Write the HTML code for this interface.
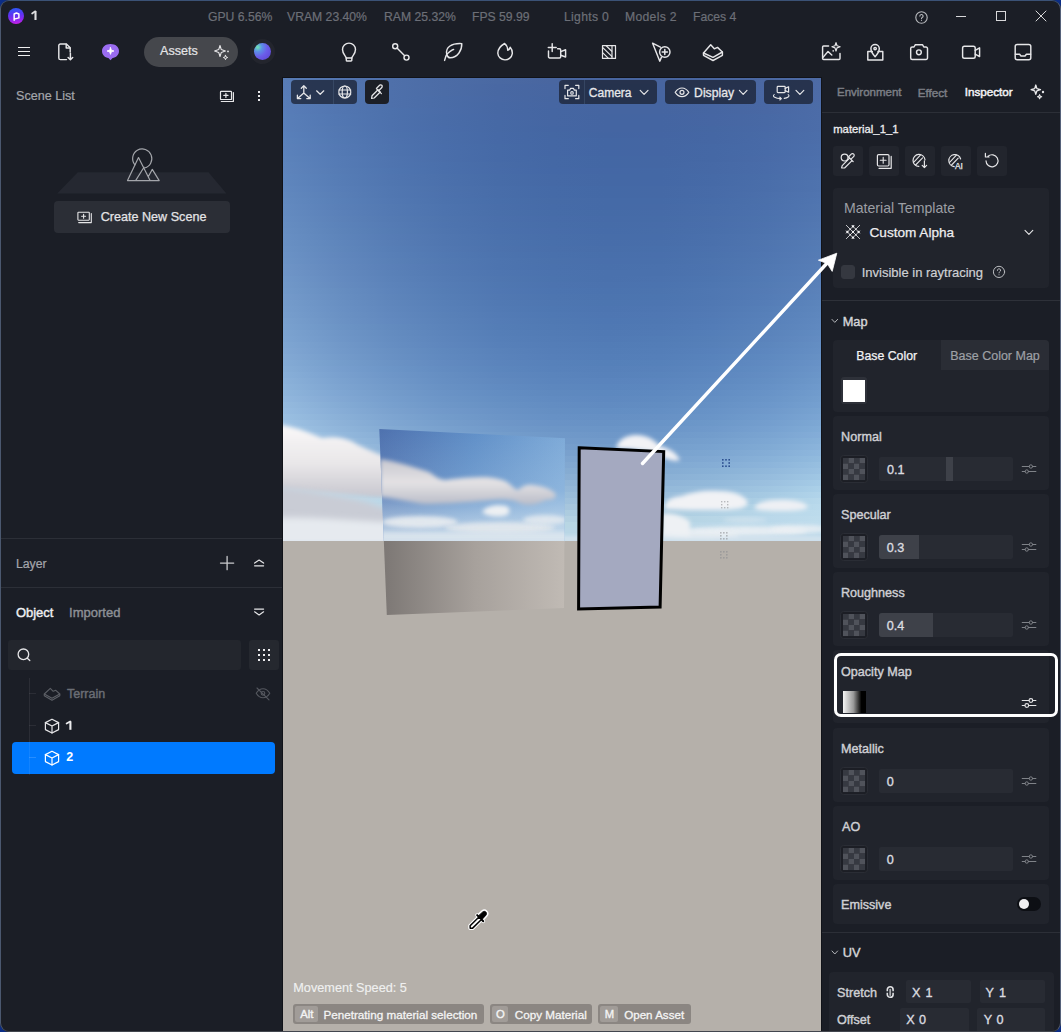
<!DOCTYPE html>
<html><head><meta charset="utf-8">
<style>
*{margin:0;padding:0;box-sizing:border-box}
html,body{width:1061px;height:1032px;overflow:hidden;background:#0b2d86;font-family:"Liberation Sans",sans-serif}
#win{position:absolute;left:0;top:0;width:1061px;height:1032px;border-radius:9px;background:#1b1e26;overflow:hidden}
#frame{position:absolute;left:0;top:0;width:1061px;height:1032px;border:1px solid #44567a;border-color:#3b5276 #56627a #42464e #4b586f;border-radius:9px;pointer-events:none}
.a{position:absolute}
.t{position:absolute;white-space:nowrap;line-height:1}
svg.i{position:absolute;overflow:visible;fill:none;stroke:#e6e6e8;stroke-width:1.45;stroke-linecap:round;stroke-linejoin:round}
.st{color:#6c6f77;font-size:12.2px;top:10.8px;-webkit-text-stroke:.2px #6c6f77}
.card{position:absolute;background:#21242c;border-radius:4px}
.inp{position:absolute;background:#282b33;border-radius:2px}
.chk{position:absolute;border-radius:3px;background:#2a2d35;border:1px solid #30333b;overflow:hidden}
.lbl{position:absolute;white-space:nowrap;line-height:1;font-size:13px;color:#cfd0d4;font-weight:bold}
.ibtn{position:absolute;width:30px;height:30px;background:#22252d;border-radius:3px}
.vb{position:absolute;background:rgba(28,36,54,0.78);border-radius:4px;height:24px;top:80px}
.key{position:absolute;top:1004px;height:20px;background:rgba(150,145,140,0.75);border-radius:2px}
</style></head><body>
<div id="win">

<!-- ===== TITLE BAR ===== -->
<div class="a" style="left:8px;top:8px;width:16px;height:16px;border-radius:50%;background:linear-gradient(175deg,#2a5cf8 0%,#5a34f2 40%,#8a28ee 70%,#d01ee6 100%)"></div>
<svg class="i" style="left:7.5px;top:7.5px" width="17" height="17" viewBox="0 0 17 17"><path d="M6.15 12.2 V6 L8.4 5 L10.9 6 V9.9 L6.15 11.1" stroke="#fff" stroke-width="1.45"/></svg>

<div class="t st" style="left:208px">GPU 6.56%</div>
<div class="t st" style="left:287px">VRAM 23.40%</div>
<div class="t st" style="left:384px">RAM 25.32%</div>
<div class="t st" style="left:472px">FPS 59.99</div>
<div class="t st" style="left:564px;letter-spacing:.3px">Lights 0</div>
<div class="t st" style="left:625px;letter-spacing:.3px">Models 2</div>
<div class="t st" style="left:693px">Faces 4</div>

<!-- help -->
<svg class="i" style="left:915px;top:11px" width="13" height="13" viewBox="0 0 13 13"><circle cx="6.5" cy="6.5" r="5.7" stroke="#b9bbbf" stroke-width="1.1"/><path d="M4.9 5.1 a1.6 1.6 0 1 1 2.3 1.4 c-.5 .3-.7 .6-.7 1.1" stroke="#b9bbbf" stroke-width="1.1"/><circle cx="6.5" cy="9.3" r=".6" fill="#b9bbbf" stroke="none"/></svg>
<!-- min -->
<div class="a" style="left:956px;top:16px;width:10px;height:1px;background:#d8d8da"></div>
<!-- max -->
<div class="a" style="left:996px;top:11px;width:10px;height:10px;border:1px solid #d8d8da"></div>
<!-- close -->
<svg class="i" style="left:1035px;top:10px" width="12" height="12" viewBox="0 0 12 12"><path d="M1 1 L11 11 M11 1 L1 11" stroke="#d8d8da" stroke-width="1"/></svg>

<!-- ===== TOOLBAR ===== -->
<div class="a" style="left:18px;top:47px;width:12px;height:1.2px;background:#eee"></div>
<div class="a" style="left:18px;top:51px;width:12px;height:1.2px;background:#eee"></div>
<div class="a" style="left:18px;top:55px;width:12px;height:1.2px;background:#eee"></div>

<!-- file import -->
<svg class="i" style="left:57px;top:43px" width="18" height="18" viewBox="0 0 18 18"><path d="M9.5 16.6 H3.4 a1.6 1.6 0 0 1-1.6-1.6 V2.6 a1.6 1.6 0 0 1 1.6-1.6 H9.4 L13.2 4.8 V9" /><path d="M9.2 1.2 V4.9 H13" /><path d="M13.4 10.2 V16.6 M11.1 14.4 L13.4 16.7 L15.7 14.4"/></svg>
<!-- purple chat -->
<svg class="i" style="left:101px;top:43px" width="19" height="18" viewBox="0 0 19 18"><path d="M9.5 1 C14.5 1 18 3.8 18 8 C18 12 15 14.6 11.6 15 L9.5 17.3 L7.4 15 C4 14.6 1 12 1 8 C1 3.8 4.5 1 9.5 1Z" fill="#9a6cf0" stroke="none"/><path d="M9.5 4.6 L10.4 7.2 L13 8 L10.4 8.8 L9.5 11.4 L8.6 8.8 L6 8 L8.6 7.2Z" fill="#fff" stroke="#fff" stroke-width=".8"/></svg>

<!-- Assets pill -->
<div class="a" style="left:144px;top:37px;width:94px;height:30px;border-radius:15px;background:#45474c"></div>
<svg class="i" style="left:214px;top:44px" width="16" height="16" viewBox="0 0 16 16"><path d="M6 1.5 L7.3 5.6 L11.4 7 L7.3 8.4 L6 12.5 L4.7 8.4 L0.6 7 L4.7 5.6Z" stroke-width="1.1"/><path d="M11.5 11.3 L12.1 12.9 L13.7 13.5 L12.1 14.1 L11.5 15.7 L10.9 14.1 L9.3 13.5 L10.9 12.9Z" stroke-width="1"/><circle cx="14" cy="7.4" r=".9" fill="#e6e6e8" stroke="none"/></svg>

<!-- sphere -->
<div class="a" style="left:250px;top:39px;width:25px;height:25px;border-radius:50%;background:#23252d"></div>
<div class="a" style="left:254px;top:43px;width:17px;height:17px;border-radius:50%;background:radial-gradient(circle at 22% 25%,#6fe7b2 0%,#5c8fe6 24%,#6b5ce9 52%,#5a42cf 100%)"></div>


<!-- bulb -->
<svg class="i" style="left:336px;top:38px" width="26" height="26" viewBox="336 38 26 26"><path d="M346.2 58 C345.8 56 342.5 54 342.5 49.6 A6.5 6.5 0 0 1 355.5 49.6 C355.5 54 352.2 56 351.8 58 Z"/><path d="M346.3 58 V60.2 a.8 .8 0 0 0 .8 .8 H351 a.8 .8 0 0 0 .8-.8 V58"/></svg>
<!-- link -->
<svg class="i" style="left:388px;top:38px" width="26" height="26" viewBox="388 38 26 26"><circle cx="395.2" cy="46.3" r="2.5"/><circle cx="406.5" cy="57.6" r="2.5"/><path d="M397 48.1 L404.7 55.8"/></svg>
<!-- leaf -->
<svg class="i" style="left:440px;top:38px" width="26" height="26" viewBox="440 38 26 26"><path d="M444.6 60.4 C445.5 57 446 55.5 447 54 C451 50.5 452 49.5 453.6 49.5"/><path d="M446.8 54.4 C445 47 452 43 461.8 43.6 C462 50 458 57.5 450 57.8 C448.5 57.8 447.5 56.5 446.8 54.4Z"/></svg>
<!-- flame -->
<svg class="i" style="left:494px;top:38px" width="22" height="26" viewBox="494 38 22 26"><path d="M504.6 43.5 C502 45 497.8 48 497.8 53.2 A7.3 7.3 0 0 0 512.3 53.6 C512.5 50.5 511.3 48.6 510.2 47.3 C509.8 48.8 509 49.8 507.8 50.2 C507.6 47.8 506.8 45.2 504.6 43.5Z"/></svg>
<!-- camera add -->
<svg class="i" style="left:544px;top:38px" width="26" height="26" viewBox="544 38 26 26"><path d="M552.2 43.6 V51.5 M548.3 47.5 H556.2"/><path d="M548.5 51 V56.7 a1.2 1.2 0 0 0 1.2 1.2 H559.5 a1.2 1.2 0 0 0 1.2-1.2 V50 a1.2 1.2 0 0 0-1.2-1.2 H557.6"/><path d="M560.8 51.6 L565.6 49.8 V57 L560.8 55.3"/></svg>
<!-- stripes -->
<svg class="i" style="left:598px;top:38px" width="22" height="26" viewBox="598 38 22 26"><rect x="602.5" y="45.6" width="13" height="12.8" stroke-width="1.2" stroke-linecap="butt"/><path d="M612 45.6 V58.4" stroke-width="1.2"/><path d="M606.2 45.8 L611.8 51.2 M602.8 47.6 L611.8 56.4 M602.8 52.8 L608.2 58.2" stroke-width="1.2"/></svg>
<!-- cursor plus -->
<svg class="i" style="left:648px;top:38px" width="26" height="26" viewBox="648 38 26 26"><path d="M660.4 47.2 L652.6 43.2 L659.8 61.2 L661.4 57.4"/><circle cx="664.8" cy="52" r="5.2"/><path d="M664.8 49.4 V54.6 M662.2 52 H667.4" stroke-width="1.5"/></svg>
<!-- terrain -->
<svg class="i" style="left:700px;top:38px" width="26" height="26" viewBox="700 38 26 26"><path d="M703.5 53 L710.7 44.8 L714.3 48.8 L717.5 47.4 L722.4 52 L713 57.3 Z"/><path d="M703.5 53 V55.3 L713 60.5 L722.4 55.3 V52"/></svg>

<!-- image sparkle -->
<svg class="i" style="left:818px;top:38px" width="26" height="26" viewBox="818 38 26 26"><path d="M828.6 46 H823.6 a1 1 0 0 0-1 1 V58.4 a1 1 0 0 0 1 1 H839 a1 1 0 0 0 1-1 V53.5"/><path d="M822.8 57.6 L828 51.5 L831.8 55"/><path d="M836 42.6 L837 45.7 L840.1 46.8 L837 47.9 L836 51 L835 47.9 L831.9 46.8 L835 45.7Z" stroke-width="1.2"/><circle cx="833.2" cy="50.9" r=".8" fill="#e6e6e8" stroke="none"/></svg>
<!-- location -->
<svg class="i" style="left:864px;top:38px" width="22" height="26" viewBox="864 38 22 26"><path d="M872.3 51.5 H867.8 V60 H882.8 V51.5 H878"/><path d="M875.1 56.7 C873 54.5 870.9 52 870.9 48.6 A4.2 4.2 0 0 1 879.3 48.6 C879.3 52 877.2 54.5 875.1 56.7Z"/><circle cx="875.1" cy="48.6" r="1.2"/></svg>
<!-- camera -->
<svg class="i" style="left:906px;top:38px" width="26" height="26" viewBox="906 38 26 26"><path d="M910.7 48.5 a1.5 1.5 0 0 1 1.5-1.5 H914 L915.2 44.8 H922.6 L923.8 47 H926 a1.5 1.5 0 0 1 1.5 1.5 V58 a1.5 1.5 0 0 1-1.5 1.5 H912.2 a1.5 1.5 0 0 1-1.5-1.5Z"/><circle cx="918.9" cy="52.3" r="2.4"/></svg>
<!-- video -->
<svg class="i" style="left:958px;top:38px" width="26" height="26" viewBox="958 38 26 26"><rect x="962.6" y="46.2" width="12.6" height="12" rx="1.8"/><path d="M975.2 50.3 L979.6 47.8 V56.6 L975.2 54.1"/></svg>
<!-- inbox -->
<svg class="i" style="left:1010px;top:38px" width="26" height="26" viewBox="1010 38 26 26"><rect x="1015.2" y="44.5" width="15.6" height="15.3" rx="2"/><path d="M1015.4 54.2 H1019.6 L1021 56 H1025 L1026.4 54.2 H1030.6"/></svg>

<!-- ===== LEFT PANEL ===== -->
<svg class="i" style="left:216px;top:86px" width="22" height="20" viewBox="216 86 22 20"><rect x="220.5" y="91.3" width="11" height="8.2" rx=".6" stroke-width="1.2"/><path d="M225.9 93.3 V97.5 M223.8 95.4 H228" stroke-width="1.2"/><path d="M221.3 101.5 H233.4 V92.6" stroke-width="1.2"/></svg>
<div class="a" style="left:258px;top:91px;width:2.2px;height:2.2px;background:#e8e8ea"></div>
<div class="a" style="left:258px;top:95px;width:2.2px;height:2.2px;background:#e8e8ea"></div>
<div class="a" style="left:258px;top:99px;width:2.2px;height:2.2px;background:#e8e8ea"></div>

<!-- empty scene illustration -->
<svg class="a" style="left:0;top:140px" width="282" height="60" viewBox="0 140 282 60"><path d="M77.8 172.2 H208.5 L226.4 193.4 H57.2 Z" fill="#252831"/></svg>
<svg class="i" style="left:120px;top:144px" width="44" height="42" viewBox="120 144 44 42"><path d="M134.9 164.8 A9.6 9.6 0 1 1 144.2 168" stroke="#a3a5aa" stroke-width="1.2"/><path d="M127.5 180.6 H159.2 M127.5 180.6 L138.5 157.6 L150.1 180.6 M135.6 180.6 L144 167.2 M148.5 176.2 L152.3 169.4 L159.2 180.6" stroke="#a3a5aa" stroke-width="1.2"/></svg>

<div class="a" style="left:54px;top:201px;width:176px;height:32px;border-radius:4px;background:#2b2e36"></div>
<svg class="i" style="left:74px;top:208px" width="22" height="20" viewBox="74 208 22 20"><rect x="77.9" y="212.2" width="11.4" height="8" rx=".6" stroke-width="1.1"/><path d="M83.6 214.2 V218.2 M81.6 216.2 H85.6" stroke-width="1.1"/><path d="M78.7 222.6 H91.3 V213.6" stroke-width="1.1"/></svg>

<div class="a" style="left:1px;top:538px;width:281px;height:1px;background:#2c2f37"></div>
<svg class="i" style="left:218px;top:554px" width="18" height="18" viewBox="218 554 18 18"><path d="M227.1 556.5 V569.7 M220.5 563.1 H233.7" stroke="#c9cacd" stroke-width="1.3"/></svg>
<svg class="i" style="left:250px;top:555px" width="18" height="14" viewBox="250 555 18 14"><path d="M254.6 563.1 L259.1 560.1 L263.6 563.1 M254.6 565.8 H263.6" stroke-width="1.2"/></svg>
<div class="a" style="left:1px;top:587px;width:281px;height:1px;background:#2c2f37"></div>

<svg class="i" style="left:250px;top:605px" width="18" height="14" viewBox="250 605 18 14"><path d="M254.6 609.1 H263.6 M254.6 611.8 L259.1 614.9 L263.6 611.8" stroke-width="1.2"/></svg>

<div class="a" style="left:8px;top:640px;width:233px;height:30px;border-radius:3px;background:#23262d"></div>
<svg class="i" style="left:14px;top:646px" width="20" height="20" viewBox="14 646 20 20"><circle cx="23.4" cy="654.3" r="5.3" stroke-width="1.3"/><path d="M27.3 658.3 L29.8 660.6" stroke-width="1.3"/></svg>
<div class="a" style="left:249px;top:640px;width:30px;height:30px;border-radius:3px;background:#25282f"></div>
<svg class="a" style="left:249px;top:640px" width="30" height="30" viewBox="249 640 30 30" fill="#ececee">
<rect x="258" y="649" width="2" height="2"/><rect x="263" y="649" width="2" height="2"/><rect x="268" y="649" width="2" height="2"/>
<rect x="258" y="654" width="2" height="2"/><rect x="263" y="654" width="2" height="2"/><rect x="268" y="654" width="2" height="2"/>
<rect x="258" y="659" width="2" height="2"/><rect x="263" y="659" width="2" height="2"/><rect x="268" y="659" width="2" height="2"/>
</svg>

<div class="a" style="left:12px;top:742px;width:263px;height:32px;border-radius:4px;background:#007aff"></div>
<div class="a" style="left:28.5px;top:678px;width:1px;height:97px;background:rgba(255,255,255,.07)"></div>
<div class="a" style="left:29px;top:693px;width:7px;height:1px;background:rgba(255,255,255,.07)"></div>
<div class="a" style="left:29px;top:725px;width:7px;height:1px;background:rgba(255,255,255,.07)"></div>
<div class="a" style="left:29px;top:757px;width:7px;height:1px;background:rgba(255,255,255,.15)"></div>

<svg class="i" style="left:40px;top:684px" width="24" height="20" viewBox="40 684 24 20"><path d="M44.3 694 L50.3 688.4 L53.2 691.3 L55.8 690.3 L59.8 694 L52 698.2 Z" stroke="#5c5f66" stroke-width="1.1"/><path d="M44.3 694 V695.8 L52 700.3 L59.8 695.8 V694" stroke="#5c5f66" stroke-width="1.1"/></svg>
<svg class="i" style="left:252px;top:684px" width="22" height="20" viewBox="252 684 22 20"><path d="M256.2 693.3 C258.5 689.5 261 688.8 263 688.8 C265 688.8 267.5 689.5 269.8 693.3 C267.5 697.1 265 697.8 263 697.8 C261 697.8 258.5 697.1 256.2 693.3Z" stroke="#55585f" stroke-width="1.1"/><circle cx="263" cy="693.3" r="1.8" stroke="#55585f" stroke-width="1.1"/><path d="M257 688 L269 699.8" stroke="#55585f" stroke-width="1.1"/></svg>

<svg class="i" style="left:40px;top:714px" width="24" height="24" viewBox="40 714 24 24"><path d="M52 719.2 L58.6 722.6 V729.6 L52 733 L45.4 729.6 V722.6 Z" stroke-width="1.2"/><path d="M45.4 722.6 L52 726 L58.6 722.6 M52 726 V733" stroke-width="1.2"/></svg>
<svg class="i" style="left:40px;top:746px" width="24" height="24" viewBox="40 746 24 24"><path d="M52 751.2 L58.6 754.6 V761.6 L52 765 L45.4 761.6 V754.6 Z" stroke="#fff" stroke-width="1.2"/><path d="M45.4 754.6 L52 758 L58.6 754.6 M52 758 V765" stroke="#fff" stroke-width="1.2"/></svg>

<!-- ===== VIEWPORT ===== -->
<div class="a" style="left:282px;top:77px;width:540px;height:954px;background:#111319"></div>
<svg class="a" style="left:283px;top:78px" width="538" height="953" viewBox="283 78 538 953">
<defs>
<linearGradient id="s0" x1="283" x2="821" y1="0" y2="0" gradientUnits="userSpaceOnUse"><stop offset="0.0" stop-color="#587cb5"/><stop offset="0.1" stop-color="#5375af"/><stop offset="0.2" stop-color="#4f70aa"/><stop offset="0.3" stop-color="#4c6ca6"/><stop offset="0.4" stop-color="#4a69a3"/><stop offset="0.5" stop-color="#4966a0"/><stop offset="0.6" stop-color="#48659f"/><stop offset="0.7" stop-color="#48659f"/><stop offset="0.8" stop-color="#4966a0"/><stop offset="0.9" stop-color="#4b68a2"/><stop offset="1.0" stop-color="#4e6ba5"/></linearGradient>
<linearGradient id="s1" x1="283" x2="821" y1="0" y2="0" gradientUnits="userSpaceOnUse"><stop offset="0.0" stop-color="#587cb6"/><stop offset="0.1" stop-color="#5376af"/><stop offset="0.2" stop-color="#4f70aa"/><stop offset="0.3" stop-color="#4c6ca6"/><stop offset="0.4" stop-color="#4968a3"/><stop offset="0.5" stop-color="#4866a1"/><stop offset="0.6" stop-color="#4765a0"/><stop offset="0.7" stop-color="#4765a0"/><stop offset="0.8" stop-color="#4966a1"/><stop offset="0.9" stop-color="#4b68a3"/><stop offset="1.0" stop-color="#4e6ba6"/></linearGradient>
<linearGradient id="s2" x1="283" x2="821" y1="0" y2="0" gradientUnits="userSpaceOnUse"><stop offset="0.0" stop-color="#587cb6"/><stop offset="0.1" stop-color="#5376b0"/><stop offset="0.2" stop-color="#4e70ab"/><stop offset="0.3" stop-color="#4b6ca6"/><stop offset="0.4" stop-color="#4868a3"/><stop offset="0.5" stop-color="#4766a1"/><stop offset="0.6" stop-color="#4665a0"/><stop offset="0.7" stop-color="#4765a0"/><stop offset="0.8" stop-color="#4866a1"/><stop offset="0.9" stop-color="#4a68a3"/><stop offset="1.0" stop-color="#4d6ba6"/></linearGradient>
<linearGradient id="s3" x1="283" x2="821" y1="0" y2="0" gradientUnits="userSpaceOnUse"><stop offset="0.0" stop-color="#587db7"/><stop offset="0.1" stop-color="#5276b0"/><stop offset="0.2" stop-color="#4e70ab"/><stop offset="0.3" stop-color="#4a6ca7"/><stop offset="0.4" stop-color="#4868a4"/><stop offset="0.5" stop-color="#4666a1"/><stop offset="0.6" stop-color="#4665a0"/><stop offset="0.7" stop-color="#4665a0"/><stop offset="0.8" stop-color="#4766a1"/><stop offset="0.9" stop-color="#4968a4"/><stop offset="1.0" stop-color="#4d6ba7"/></linearGradient>
<linearGradient id="s4" x1="283" x2="821" y1="0" y2="0" gradientUnits="userSpaceOnUse"><stop offset="0.0" stop-color="#587db7"/><stop offset="0.1" stop-color="#5276b1"/><stop offset="0.2" stop-color="#4e70ab"/><stop offset="0.3" stop-color="#4a6ca7"/><stop offset="0.4" stop-color="#4768a4"/><stop offset="0.5" stop-color="#4666a2"/><stop offset="0.6" stop-color="#4565a1"/><stop offset="0.7" stop-color="#4565a1"/><stop offset="0.8" stop-color="#4766a2"/><stop offset="0.9" stop-color="#4968a4"/><stop offset="1.0" stop-color="#4c6ca7"/></linearGradient>
<linearGradient id="s5" x1="283" x2="821" y1="0" y2="0" gradientUnits="userSpaceOnUse"><stop offset="0.0" stop-color="#587db8"/><stop offset="0.1" stop-color="#5276b1"/><stop offset="0.2" stop-color="#4d71ac"/><stop offset="0.3" stop-color="#4a6ca8"/><stop offset="0.4" stop-color="#4768a4"/><stop offset="0.5" stop-color="#4566a2"/><stop offset="0.6" stop-color="#4565a1"/><stop offset="0.7" stop-color="#4565a1"/><stop offset="0.8" stop-color="#4666a2"/><stop offset="0.9" stop-color="#4968a4"/><stop offset="1.0" stop-color="#4c6ca8"/></linearGradient>
<linearGradient id="s6" x1="283" x2="821" y1="0" y2="0" gradientUnits="userSpaceOnUse"><stop offset="0.0" stop-color="#587eb8"/><stop offset="0.1" stop-color="#5277b2"/><stop offset="0.2" stop-color="#4d71ac"/><stop offset="0.3" stop-color="#496ca8"/><stop offset="0.4" stop-color="#4768a5"/><stop offset="0.5" stop-color="#4566a2"/><stop offset="0.6" stop-color="#4465a1"/><stop offset="0.7" stop-color="#4465a2"/><stop offset="0.8" stop-color="#4666a3"/><stop offset="0.9" stop-color="#4869a5"/><stop offset="1.0" stop-color="#4c6ca8"/></linearGradient>
<linearGradient id="s7" x1="283" x2="821" y1="0" y2="0" gradientUnits="userSpaceOnUse"><stop offset="0.0" stop-color="#597fb9"/><stop offset="0.1" stop-color="#5277b2"/><stop offset="0.2" stop-color="#4d71ad"/><stop offset="0.3" stop-color="#496ca8"/><stop offset="0.4" stop-color="#4669a5"/><stop offset="0.5" stop-color="#4566a3"/><stop offset="0.6" stop-color="#4465a2"/><stop offset="0.7" stop-color="#4465a2"/><stop offset="0.8" stop-color="#4666a3"/><stop offset="0.9" stop-color="#4869a5"/><stop offset="1.0" stop-color="#4c6da9"/></linearGradient>
<linearGradient id="s8" x1="283" x2="821" y1="0" y2="0" gradientUnits="userSpaceOnUse"><stop offset="0.0" stop-color="#597fb9"/><stop offset="0.1" stop-color="#5378b2"/><stop offset="0.2" stop-color="#4d71ad"/><stop offset="0.3" stop-color="#496ca9"/><stop offset="0.4" stop-color="#4669a5"/><stop offset="0.5" stop-color="#4466a3"/><stop offset="0.6" stop-color="#4465a2"/><stop offset="0.7" stop-color="#4465a2"/><stop offset="0.8" stop-color="#4567a3"/><stop offset="0.9" stop-color="#4869a6"/><stop offset="1.0" stop-color="#4c6da9"/></linearGradient>
<linearGradient id="s9" x1="283" x2="821" y1="0" y2="0" gradientUnits="userSpaceOnUse"><stop offset="0.0" stop-color="#5980ba"/><stop offset="0.1" stop-color="#5378b3"/><stop offset="0.2" stop-color="#4d72ad"/><stop offset="0.3" stop-color="#496da9"/><stop offset="0.4" stop-color="#4669a6"/><stop offset="0.5" stop-color="#4467a3"/><stop offset="0.6" stop-color="#4365a2"/><stop offset="0.7" stop-color="#4465a3"/><stop offset="0.8" stop-color="#4567a4"/><stop offset="0.9" stop-color="#486aa6"/><stop offset="1.0" stop-color="#4c6eaa"/></linearGradient>
<linearGradient id="s10" x1="283" x2="821" y1="0" y2="0" gradientUnits="userSpaceOnUse"><stop offset="0.0" stop-color="#5a81ba"/><stop offset="0.1" stop-color="#5379b3"/><stop offset="0.2" stop-color="#4e72ae"/><stop offset="0.3" stop-color="#496da9"/><stop offset="0.4" stop-color="#4669a6"/><stop offset="0.5" stop-color="#4467a4"/><stop offset="0.6" stop-color="#4366a3"/><stop offset="0.7" stop-color="#4466a3"/><stop offset="0.8" stop-color="#4567a4"/><stop offset="0.9" stop-color="#486aa7"/><stop offset="1.0" stop-color="#4c6eaa"/></linearGradient>
<linearGradient id="s11" x1="283" x2="821" y1="0" y2="0" gradientUnits="userSpaceOnUse"><stop offset="0.0" stop-color="#5b81ba"/><stop offset="0.1" stop-color="#5479b4"/><stop offset="0.2" stop-color="#4e73ae"/><stop offset="0.3" stop-color="#496daa"/><stop offset="0.4" stop-color="#466aa6"/><stop offset="0.5" stop-color="#4467a4"/><stop offset="0.6" stop-color="#4366a3"/><stop offset="0.7" stop-color="#4466a3"/><stop offset="0.8" stop-color="#4568a5"/><stop offset="0.9" stop-color="#486aa7"/><stop offset="1.0" stop-color="#4c6fab"/></linearGradient>
<linearGradient id="s12" x1="283" x2="821" y1="0" y2="0" gradientUnits="userSpaceOnUse"><stop offset="0.0" stop-color="#5b82bb"/><stop offset="0.1" stop-color="#547ab4"/><stop offset="0.2" stop-color="#4e73ae"/><stop offset="0.3" stop-color="#4a6eaa"/><stop offset="0.4" stop-color="#466aa7"/><stop offset="0.5" stop-color="#4467a5"/><stop offset="0.6" stop-color="#4366a4"/><stop offset="0.7" stop-color="#4466a4"/><stop offset="0.8" stop-color="#4568a5"/><stop offset="0.9" stop-color="#486ba8"/><stop offset="1.0" stop-color="#4d6fab"/></linearGradient>
<linearGradient id="s13" x1="283" x2="821" y1="0" y2="0" gradientUnits="userSpaceOnUse"><stop offset="0.0" stop-color="#5c83bb"/><stop offset="0.1" stop-color="#557bb5"/><stop offset="0.2" stop-color="#4f74af"/><stop offset="0.3" stop-color="#4a6eaa"/><stop offset="0.4" stop-color="#466aa7"/><stop offset="0.5" stop-color="#4468a5"/><stop offset="0.6" stop-color="#4367a4"/><stop offset="0.7" stop-color="#4467a4"/><stop offset="0.8" stop-color="#4568a5"/><stop offset="0.9" stop-color="#496ba8"/><stop offset="1.0" stop-color="#4d70ac"/></linearGradient>
<linearGradient id="s14" x1="283" x2="821" y1="0" y2="0" gradientUnits="userSpaceOnUse"><stop offset="0.0" stop-color="#5d84bc"/><stop offset="0.1" stop-color="#557bb5"/><stop offset="0.2" stop-color="#4f74af"/><stop offset="0.3" stop-color="#4a6fab"/><stop offset="0.4" stop-color="#476ba7"/><stop offset="0.5" stop-color="#4468a5"/><stop offset="0.6" stop-color="#4367a4"/><stop offset="0.7" stop-color="#4467a4"/><stop offset="0.8" stop-color="#4669a6"/><stop offset="0.9" stop-color="#496ca9"/><stop offset="1.0" stop-color="#4d70ac"/></linearGradient>
<linearGradient id="s15" x1="283" x2="821" y1="0" y2="0" gradientUnits="userSpaceOnUse"><stop offset="0.0" stop-color="#5e84bc"/><stop offset="0.1" stop-color="#567cb5"/><stop offset="0.2" stop-color="#4f75b0"/><stop offset="0.3" stop-color="#4a6fab"/><stop offset="0.4" stop-color="#476ba8"/><stop offset="0.5" stop-color="#4468a6"/><stop offset="0.6" stop-color="#4467a5"/><stop offset="0.7" stop-color="#4468a5"/><stop offset="0.8" stop-color="#4669a6"/><stop offset="0.9" stop-color="#496ca9"/><stop offset="1.0" stop-color="#4e71ad"/></linearGradient>
<linearGradient id="s16" x1="283" x2="821" y1="0" y2="0" gradientUnits="userSpaceOnUse"><stop offset="0.0" stop-color="#5e85bd"/><stop offset="0.1" stop-color="#567db6"/><stop offset="0.2" stop-color="#5075b0"/><stop offset="0.3" stop-color="#4b70ab"/><stop offset="0.4" stop-color="#476ca8"/><stop offset="0.5" stop-color="#4569a6"/><stop offset="0.6" stop-color="#4468a5"/><stop offset="0.7" stop-color="#4468a5"/><stop offset="0.8" stop-color="#466aa7"/><stop offset="0.9" stop-color="#496da9"/><stop offset="1.0" stop-color="#4e72ad"/></linearGradient>
<linearGradient id="s17" x1="283" x2="821" y1="0" y2="0" gradientUnits="userSpaceOnUse"><stop offset="0.0" stop-color="#5f86bd"/><stop offset="0.1" stop-color="#577db6"/><stop offset="0.2" stop-color="#5076b0"/><stop offset="0.3" stop-color="#4b70ac"/><stop offset="0.4" stop-color="#476ca8"/><stop offset="0.5" stop-color="#4569a6"/><stop offset="0.6" stop-color="#4468a5"/><stop offset="0.7" stop-color="#4468a6"/><stop offset="0.8" stop-color="#466aa7"/><stop offset="0.9" stop-color="#4a6eaa"/><stop offset="1.0" stop-color="#4f73ae"/></linearGradient>
<linearGradient id="s18" x1="283" x2="821" y1="0" y2="0" gradientUnits="userSpaceOnUse"><stop offset="0.0" stop-color="#6087be"/><stop offset="0.1" stop-color="#587eb7"/><stop offset="0.2" stop-color="#5177b1"/><stop offset="0.3" stop-color="#4c71ac"/><stop offset="0.4" stop-color="#486da9"/><stop offset="0.5" stop-color="#456aa7"/><stop offset="0.6" stop-color="#4469a6"/><stop offset="0.7" stop-color="#4569a6"/><stop offset="0.8" stop-color="#476ba8"/><stop offset="0.9" stop-color="#4a6eaa"/><stop offset="1.0" stop-color="#4f73ae"/></linearGradient>
<linearGradient id="s19" x1="283" x2="821" y1="0" y2="0" gradientUnits="userSpaceOnUse"><stop offset="0.0" stop-color="#6188be"/><stop offset="0.1" stop-color="#597fb7"/><stop offset="0.2" stop-color="#5177b1"/><stop offset="0.3" stop-color="#4c71ad"/><stop offset="0.4" stop-color="#486da9"/><stop offset="0.5" stop-color="#456aa7"/><stop offset="0.6" stop-color="#4469a6"/><stop offset="0.7" stop-color="#4569a6"/><stop offset="0.8" stop-color="#476ba8"/><stop offset="0.9" stop-color="#4b6fab"/><stop offset="1.0" stop-color="#5074af"/></linearGradient>
<linearGradient id="s20" x1="283" x2="821" y1="0" y2="0" gradientUnits="userSpaceOnUse"><stop offset="0.0" stop-color="#6289bf"/><stop offset="0.1" stop-color="#5980b8"/><stop offset="0.2" stop-color="#5278b2"/><stop offset="0.3" stop-color="#4c72ad"/><stop offset="0.4" stop-color="#486eaa"/><stop offset="0.5" stop-color="#466ba7"/><stop offset="0.6" stop-color="#456aa7"/><stop offset="0.7" stop-color="#456aa7"/><stop offset="0.8" stop-color="#476ca9"/><stop offset="0.9" stop-color="#4b70ab"/><stop offset="1.0" stop-color="#5075b0"/></linearGradient>
<linearGradient id="s21" x1="283" x2="821" y1="0" y2="0" gradientUnits="userSpaceOnUse"><stop offset="0.0" stop-color="#638ac0"/><stop offset="0.1" stop-color="#5a80b8"/><stop offset="0.2" stop-color="#5379b2"/><stop offset="0.3" stop-color="#4d73ae"/><stop offset="0.4" stop-color="#496eaa"/><stop offset="0.5" stop-color="#466ba8"/><stop offset="0.6" stop-color="#456aa7"/><stop offset="0.7" stop-color="#466aa7"/><stop offset="0.8" stop-color="#486da9"/><stop offset="0.9" stop-color="#4b70ac"/><stop offset="1.0" stop-color="#5176b0"/></linearGradient>
<linearGradient id="s22" x1="283" x2="821" y1="0" y2="0" gradientUnits="userSpaceOnUse"><stop offset="0.0" stop-color="#648bc0"/><stop offset="0.1" stop-color="#5b81b9"/><stop offset="0.2" stop-color="#5379b3"/><stop offset="0.3" stop-color="#4d73ae"/><stop offset="0.4" stop-color="#496faa"/><stop offset="0.5" stop-color="#466ca8"/><stop offset="0.6" stop-color="#456ba7"/><stop offset="0.7" stop-color="#466ba8"/><stop offset="0.8" stop-color="#486daa"/><stop offset="0.9" stop-color="#4c71ad"/><stop offset="1.0" stop-color="#5176b1"/></linearGradient>
<linearGradient id="s23" x1="283" x2="821" y1="0" y2="0" gradientUnits="userSpaceOnUse"><stop offset="0.0" stop-color="#658cc1"/><stop offset="0.1" stop-color="#5c82b9"/><stop offset="0.2" stop-color="#547ab3"/><stop offset="0.3" stop-color="#4e74ae"/><stop offset="0.4" stop-color="#4a6fab"/><stop offset="0.5" stop-color="#476ca9"/><stop offset="0.6" stop-color="#466ba8"/><stop offset="0.7" stop-color="#466ca8"/><stop offset="0.8" stop-color="#496eaa"/><stop offset="0.9" stop-color="#4c72ad"/><stop offset="1.0" stop-color="#5277b1"/></linearGradient>
<linearGradient id="s24" x1="283" x2="821" y1="0" y2="0" gradientUnits="userSpaceOnUse"><stop offset="0.0" stop-color="#668dc1"/><stop offset="0.1" stop-color="#5c83ba"/><stop offset="0.2" stop-color="#557bb4"/><stop offset="0.3" stop-color="#4e74af"/><stop offset="0.4" stop-color="#4a70ab"/><stop offset="0.5" stop-color="#476da9"/><stop offset="0.6" stop-color="#466ca8"/><stop offset="0.7" stop-color="#476ca9"/><stop offset="0.8" stop-color="#496eab"/><stop offset="0.9" stop-color="#4d72ae"/><stop offset="1.0" stop-color="#5378b2"/></linearGradient>
<linearGradient id="s25" x1="283" x2="821" y1="0" y2="0" gradientUnits="userSpaceOnUse"><stop offset="0.0" stop-color="#678ec2"/><stop offset="0.1" stop-color="#5d84ba"/><stop offset="0.2" stop-color="#557cb4"/><stop offset="0.3" stop-color="#4f75af"/><stop offset="0.4" stop-color="#4a70ac"/><stop offset="0.5" stop-color="#486daa"/><stop offset="0.6" stop-color="#466ca9"/><stop offset="0.7" stop-color="#476da9"/><stop offset="0.8" stop-color="#496fab"/><stop offset="0.9" stop-color="#4d73ae"/><stop offset="1.0" stop-color="#5379b3"/></linearGradient>
<linearGradient id="s26" x1="283" x2="821" y1="0" y2="0" gradientUnits="userSpaceOnUse"><stop offset="0.0" stop-color="#688fc3"/><stop offset="0.1" stop-color="#5e85bb"/><stop offset="0.2" stop-color="#567cb5"/><stop offset="0.3" stop-color="#5076b0"/><stop offset="0.4" stop-color="#4b71ac"/><stop offset="0.5" stop-color="#486eaa"/><stop offset="0.6" stop-color="#476da9"/><stop offset="0.7" stop-color="#476daa"/><stop offset="0.8" stop-color="#4a70ac"/><stop offset="0.9" stop-color="#4e74af"/><stop offset="1.0" stop-color="#547ab3"/></linearGradient>
<linearGradient id="s27" x1="283" x2="821" y1="0" y2="0" gradientUnits="userSpaceOnUse"><stop offset="0.0" stop-color="#6990c3"/><stop offset="0.1" stop-color="#5f86bc"/><stop offset="0.2" stop-color="#577db5"/><stop offset="0.3" stop-color="#5076b0"/><stop offset="0.4" stop-color="#4b72ad"/><stop offset="0.5" stop-color="#486fab"/><stop offset="0.6" stop-color="#476daa"/><stop offset="0.7" stop-color="#486eaa"/><stop offset="0.8" stop-color="#4a70ac"/><stop offset="0.9" stop-color="#4f75af"/><stop offset="1.0" stop-color="#557bb4"/></linearGradient>
<linearGradient id="s28" x1="283" x2="821" y1="0" y2="0" gradientUnits="userSpaceOnUse"><stop offset="0.0" stop-color="#6a91c4"/><stop offset="0.1" stop-color="#6087bc"/><stop offset="0.2" stop-color="#577eb6"/><stop offset="0.3" stop-color="#5177b1"/><stop offset="0.4" stop-color="#4c72ad"/><stop offset="0.5" stop-color="#496fab"/><stop offset="0.6" stop-color="#486eaa"/><stop offset="0.7" stop-color="#486fab"/><stop offset="0.8" stop-color="#4b71ad"/><stop offset="0.9" stop-color="#4f75b0"/><stop offset="1.0" stop-color="#557cb5"/></linearGradient>
<linearGradient id="s29" x1="283" x2="821" y1="0" y2="0" gradientUnits="userSpaceOnUse"><stop offset="0.0" stop-color="#6b92c5"/><stop offset="0.1" stop-color="#6187bd"/><stop offset="0.2" stop-color="#587fb7"/><stop offset="0.3" stop-color="#5178b2"/><stop offset="0.4" stop-color="#4c73ae"/><stop offset="0.5" stop-color="#4970ac"/><stop offset="0.6" stop-color="#486fab"/><stop offset="0.7" stop-color="#496fac"/><stop offset="0.8" stop-color="#4b72ad"/><stop offset="0.9" stop-color="#5076b1"/><stop offset="1.0" stop-color="#567cb5"/></linearGradient>
<linearGradient id="s30" x1="283" x2="821" y1="0" y2="0" gradientUnits="userSpaceOnUse"><stop offset="0.0" stop-color="#6c93c5"/><stop offset="0.1" stop-color="#6288be"/><stop offset="0.2" stop-color="#5980b7"/><stop offset="0.3" stop-color="#5279b2"/><stop offset="0.4" stop-color="#4d74af"/><stop offset="0.5" stop-color="#4a71ac"/><stop offset="0.6" stop-color="#496fac"/><stop offset="0.7" stop-color="#4970ac"/><stop offset="0.8" stop-color="#4c73ae"/><stop offset="0.9" stop-color="#5077b1"/><stop offset="1.0" stop-color="#577db6"/></linearGradient>
<linearGradient id="s31" x1="283" x2="821" y1="0" y2="0" gradientUnits="userSpaceOnUse"><stop offset="0.0" stop-color="#6e94c6"/><stop offset="0.1" stop-color="#6389be"/><stop offset="0.2" stop-color="#5a80b8"/><stop offset="0.3" stop-color="#5379b3"/><stop offset="0.4" stop-color="#4d74af"/><stop offset="0.5" stop-color="#4a71ad"/><stop offset="0.6" stop-color="#4970ac"/><stop offset="0.7" stop-color="#4a71ad"/><stop offset="0.8" stop-color="#4c73af"/><stop offset="0.9" stop-color="#5178b2"/><stop offset="1.0" stop-color="#577eb7"/></linearGradient>
<linearGradient id="s32" x1="283" x2="821" y1="0" y2="0" gradientUnits="userSpaceOnUse"><stop offset="0.0" stop-color="#6f95c7"/><stop offset="0.1" stop-color="#648abf"/><stop offset="0.2" stop-color="#5a81b8"/><stop offset="0.3" stop-color="#537ab3"/><stop offset="0.4" stop-color="#4e75b0"/><stop offset="0.5" stop-color="#4b72ae"/><stop offset="0.6" stop-color="#4a71ad"/><stop offset="0.7" stop-color="#4a71ad"/><stop offset="0.8" stop-color="#4d74af"/><stop offset="0.9" stop-color="#5279b3"/><stop offset="1.0" stop-color="#587fb8"/></linearGradient>
<linearGradient id="s33" x1="283" x2="821" y1="0" y2="0" gradientUnits="userSpaceOnUse"><stop offset="0.0" stop-color="#7097c8"/><stop offset="0.1" stop-color="#658bc0"/><stop offset="0.2" stop-color="#5b82b9"/><stop offset="0.3" stop-color="#547bb4"/><stop offset="0.4" stop-color="#4f76b0"/><stop offset="0.5" stop-color="#4b73ae"/><stop offset="0.6" stop-color="#4a71ad"/><stop offset="0.7" stop-color="#4b72ae"/><stop offset="0.8" stop-color="#4d75b0"/><stop offset="0.9" stop-color="#527ab4"/><stop offset="1.0" stop-color="#5980b9"/></linearGradient>
<linearGradient id="s34" x1="283" x2="821" y1="0" y2="0" gradientUnits="userSpaceOnUse"><stop offset="0.0" stop-color="#7198c8"/><stop offset="0.1" stop-color="#668cc0"/><stop offset="0.2" stop-color="#5c83ba"/><stop offset="0.3" stop-color="#557cb5"/><stop offset="0.4" stop-color="#4f77b1"/><stop offset="0.5" stop-color="#4c73af"/><stop offset="0.6" stop-color="#4b72ae"/><stop offset="0.7" stop-color="#4b73af"/><stop offset="0.8" stop-color="#4e76b1"/><stop offset="0.9" stop-color="#537bb4"/><stop offset="1.0" stop-color="#5a81b9"/></linearGradient>
<linearGradient id="s35" x1="283" x2="821" y1="0" y2="0" gradientUnits="userSpaceOnUse"><stop offset="0.0" stop-color="#7299c9"/><stop offset="0.1" stop-color="#678ec1"/><stop offset="0.2" stop-color="#5d84bb"/><stop offset="0.3" stop-color="#557db5"/><stop offset="0.4" stop-color="#5077b2"/><stop offset="0.5" stop-color="#4c74b0"/><stop offset="0.6" stop-color="#4b73af"/><stop offset="0.7" stop-color="#4c74af"/><stop offset="0.8" stop-color="#4f77b2"/><stop offset="0.9" stop-color="#547bb5"/><stop offset="1.0" stop-color="#5b82ba"/></linearGradient>
<linearGradient id="s36" x1="283" x2="821" y1="0" y2="0" gradientUnits="userSpaceOnUse"><stop offset="0.0" stop-color="#749aca"/><stop offset="0.1" stop-color="#688fc2"/><stop offset="0.2" stop-color="#5e85bb"/><stop offset="0.3" stop-color="#567eb6"/><stop offset="0.4" stop-color="#5178b2"/><stop offset="0.5" stop-color="#4d75b0"/><stop offset="0.6" stop-color="#4c74af"/><stop offset="0.7" stop-color="#4c75b0"/><stop offset="0.8" stop-color="#4f77b2"/><stop offset="0.9" stop-color="#547cb6"/><stop offset="1.0" stop-color="#5b83bb"/></linearGradient>
<linearGradient id="s37" x1="283" x2="821" y1="0" y2="0" gradientUnits="userSpaceOnUse"><stop offset="0.0" stop-color="#759ccb"/><stop offset="0.1" stop-color="#6990c3"/><stop offset="0.2" stop-color="#5f86bc"/><stop offset="0.3" stop-color="#577fb7"/><stop offset="0.4" stop-color="#5179b3"/><stop offset="0.5" stop-color="#4e76b1"/><stop offset="0.6" stop-color="#4c75b0"/><stop offset="0.7" stop-color="#4d75b1"/><stop offset="0.8" stop-color="#5078b3"/><stop offset="0.9" stop-color="#557db7"/><stop offset="1.0" stop-color="#5c85bc"/></linearGradient>
<linearGradient id="s38" x1="283" x2="821" y1="0" y2="0" gradientUnits="userSpaceOnUse"><stop offset="0.0" stop-color="#769dcc"/><stop offset="0.1" stop-color="#6a91c4"/><stop offset="0.2" stop-color="#6087bd"/><stop offset="0.3" stop-color="#5880b8"/><stop offset="0.4" stop-color="#527ab4"/><stop offset="0.5" stop-color="#4e77b2"/><stop offset="0.6" stop-color="#4d75b1"/><stop offset="0.7" stop-color="#4e76b2"/><stop offset="0.8" stop-color="#5179b4"/><stop offset="0.9" stop-color="#567fb8"/><stop offset="1.0" stop-color="#5d86bd"/></linearGradient>
<linearGradient id="s39" x1="283" x2="821" y1="0" y2="0" gradientUnits="userSpaceOnUse"><stop offset="0.0" stop-color="#779ecd"/><stop offset="0.1" stop-color="#6b92c4"/><stop offset="0.2" stop-color="#6188be"/><stop offset="0.3" stop-color="#5981b8"/><stop offset="0.4" stop-color="#537bb5"/><stop offset="0.5" stop-color="#4f78b3"/><stop offset="0.6" stop-color="#4e76b2"/><stop offset="0.7" stop-color="#4f77b3"/><stop offset="0.8" stop-color="#527ab5"/><stop offset="0.9" stop-color="#5780b9"/><stop offset="1.0" stop-color="#5e87be"/></linearGradient>
<linearGradient id="s40" x1="283" x2="821" y1="0" y2="0" gradientUnits="userSpaceOnUse"><stop offset="0.0" stop-color="#79a0ce"/><stop offset="0.1" stop-color="#6c93c5"/><stop offset="0.2" stop-color="#6289bf"/><stop offset="0.3" stop-color="#5a82b9"/><stop offset="0.4" stop-color="#547cb6"/><stop offset="0.5" stop-color="#5079b3"/><stop offset="0.6" stop-color="#4e77b3"/><stop offset="0.7" stop-color="#4f78b3"/><stop offset="0.8" stop-color="#527bb6"/><stop offset="0.9" stop-color="#5881ba"/><stop offset="1.0" stop-color="#5f88bf"/></linearGradient>
<linearGradient id="s41" x1="283" x2="821" y1="0" y2="0" gradientUnits="userSpaceOnUse"><stop offset="0.0" stop-color="#7aa1cf"/><stop offset="0.1" stop-color="#6d95c6"/><stop offset="0.2" stop-color="#638bbf"/><stop offset="0.3" stop-color="#5b83ba"/><stop offset="0.4" stop-color="#547db6"/><stop offset="0.5" stop-color="#517ab4"/><stop offset="0.6" stop-color="#4f78b3"/><stop offset="0.7" stop-color="#5079b4"/><stop offset="0.8" stop-color="#537cb7"/><stop offset="0.9" stop-color="#5982ba"/><stop offset="1.0" stop-color="#6089c0"/></linearGradient>
<linearGradient id="s42" x1="283" x2="821" y1="0" y2="0" gradientUnits="userSpaceOnUse"><stop offset="0.0" stop-color="#7ca3d0"/><stop offset="0.1" stop-color="#6f96c7"/><stop offset="0.2" stop-color="#648cc0"/><stop offset="0.3" stop-color="#5c84bb"/><stop offset="0.4" stop-color="#557eb7"/><stop offset="0.5" stop-color="#527bb5"/><stop offset="0.6" stop-color="#5079b4"/><stop offset="0.7" stop-color="#517ab5"/><stop offset="0.8" stop-color="#547eb8"/><stop offset="0.9" stop-color="#5a83bb"/><stop offset="1.0" stop-color="#618bc1"/></linearGradient>
<linearGradient id="s43" x1="283" x2="821" y1="0" y2="0" gradientUnits="userSpaceOnUse"><stop offset="0.0" stop-color="#7da4d1"/><stop offset="0.1" stop-color="#7097c8"/><stop offset="0.2" stop-color="#658dc1"/><stop offset="0.3" stop-color="#5d85bc"/><stop offset="0.4" stop-color="#567fb8"/><stop offset="0.5" stop-color="#537cb6"/><stop offset="0.6" stop-color="#517ab5"/><stop offset="0.7" stop-color="#527cb6"/><stop offset="0.8" stop-color="#557fb8"/><stop offset="0.9" stop-color="#5b84bc"/><stop offset="1.0" stop-color="#638cc2"/></linearGradient>
<linearGradient id="s44" x1="283" x2="821" y1="0" y2="0" gradientUnits="userSpaceOnUse"><stop offset="0.0" stop-color="#7fa6d2"/><stop offset="0.1" stop-color="#7299c9"/><stop offset="0.2" stop-color="#668ec2"/><stop offset="0.3" stop-color="#5e86bd"/><stop offset="0.4" stop-color="#5780b9"/><stop offset="0.5" stop-color="#547db7"/><stop offset="0.6" stop-color="#527cb6"/><stop offset="0.7" stop-color="#537db7"/><stop offset="0.8" stop-color="#5680b9"/><stop offset="0.9" stop-color="#5c86bd"/><stop offset="1.0" stop-color="#648ec3"/></linearGradient>
<linearGradient id="s45" x1="283" x2="821" y1="0" y2="0" gradientUnits="userSpaceOnUse"><stop offset="0.0" stop-color="#81a7d3"/><stop offset="0.1" stop-color="#739aca"/><stop offset="0.2" stop-color="#6890c3"/><stop offset="0.3" stop-color="#5f88be"/><stop offset="0.4" stop-color="#5982ba"/><stop offset="0.5" stop-color="#557eb8"/><stop offset="0.6" stop-color="#537db7"/><stop offset="0.7" stop-color="#547eb8"/><stop offset="0.8" stop-color="#5781bb"/><stop offset="0.9" stop-color="#5d87bf"/><stop offset="1.0" stop-color="#658fc4"/></linearGradient>
<linearGradient id="s46" x1="283" x2="821" y1="0" y2="0" gradientUnits="userSpaceOnUse"><stop offset="0.0" stop-color="#83a9d4"/><stop offset="0.1" stop-color="#759ccb"/><stop offset="0.2" stop-color="#6991c4"/><stop offset="0.3" stop-color="#6089bf"/><stop offset="0.4" stop-color="#5a83bb"/><stop offset="0.5" stop-color="#567fb9"/><stop offset="0.6" stop-color="#547eb8"/><stop offset="0.7" stop-color="#557fb9"/><stop offset="0.8" stop-color="#5883bc"/><stop offset="0.9" stop-color="#5e89c0"/><stop offset="1.0" stop-color="#6791c5"/></linearGradient>
<linearGradient id="s47" x1="283" x2="821" y1="0" y2="0" gradientUnits="userSpaceOnUse"><stop offset="0.0" stop-color="#84abd5"/><stop offset="0.1" stop-color="#769ecc"/><stop offset="0.2" stop-color="#6b93c5"/><stop offset="0.3" stop-color="#628ac0"/><stop offset="0.4" stop-color="#5b84bc"/><stop offset="0.5" stop-color="#5781ba"/><stop offset="0.6" stop-color="#5580b9"/><stop offset="0.7" stop-color="#5681ba"/><stop offset="0.8" stop-color="#5a84bd"/><stop offset="0.9" stop-color="#608ac1"/><stop offset="1.0" stop-color="#6892c7"/></linearGradient>
<linearGradient id="s48" x1="283" x2="821" y1="0" y2="0" gradientUnits="userSpaceOnUse"><stop offset="0.0" stop-color="#86add6"/><stop offset="0.1" stop-color="#789fce"/><stop offset="0.2" stop-color="#6c95c7"/><stop offset="0.3" stop-color="#638cc1"/><stop offset="0.4" stop-color="#5c86bd"/><stop offset="0.5" stop-color="#5882bb"/><stop offset="0.6" stop-color="#5781ba"/><stop offset="0.7" stop-color="#5882bb"/><stop offset="0.8" stop-color="#5b86be"/><stop offset="0.9" stop-color="#618cc2"/><stop offset="1.0" stop-color="#6a94c8"/></linearGradient>
<linearGradient id="s49" x1="283" x2="821" y1="0" y2="0" gradientUnits="userSpaceOnUse"><stop offset="0.0" stop-color="#88afd8"/><stop offset="0.1" stop-color="#7aa1cf"/><stop offset="0.2" stop-color="#6e96c8"/><stop offset="0.3" stop-color="#658ec2"/><stop offset="0.4" stop-color="#5e87be"/><stop offset="0.5" stop-color="#5a84bc"/><stop offset="0.6" stop-color="#5882bb"/><stop offset="0.7" stop-color="#5984bc"/><stop offset="0.8" stop-color="#5d87bf"/><stop offset="0.9" stop-color="#638dc3"/><stop offset="1.0" stop-color="#6b96c9"/></linearGradient>
<linearGradient id="s50" x1="283" x2="821" y1="0" y2="0" gradientUnits="userSpaceOnUse"><stop offset="0.0" stop-color="#8bb1d9"/><stop offset="0.1" stop-color="#7ca3d0"/><stop offset="0.2" stop-color="#7098c9"/><stop offset="0.3" stop-color="#668fc3"/><stop offset="0.4" stop-color="#6089bf"/><stop offset="0.5" stop-color="#5b85bd"/><stop offset="0.6" stop-color="#5a84bd"/><stop offset="0.7" stop-color="#5b85be"/><stop offset="0.8" stop-color="#5e89c0"/><stop offset="0.9" stop-color="#648fc4"/><stop offset="1.0" stop-color="#6d98ca"/></linearGradient>
<linearGradient id="s51" x1="283" x2="821" y1="0" y2="0" gradientUnits="userSpaceOnUse"><stop offset="0.0" stop-color="#8db3da"/><stop offset="0.1" stop-color="#7ea5d1"/><stop offset="0.2" stop-color="#729aca"/><stop offset="0.3" stop-color="#6891c4"/><stop offset="0.4" stop-color="#618bc1"/><stop offset="0.5" stop-color="#5d87be"/><stop offset="0.6" stop-color="#5b86be"/><stop offset="0.7" stop-color="#5c87bf"/><stop offset="0.8" stop-color="#608bc1"/><stop offset="0.9" stop-color="#6691c6"/><stop offset="1.0" stop-color="#6f9acc"/></linearGradient>
<linearGradient id="s52" x1="283" x2="821" y1="0" y2="0" gradientUnits="userSpaceOnUse"><stop offset="0.0" stop-color="#8fb5db"/><stop offset="0.1" stop-color="#80a7d3"/><stop offset="0.2" stop-color="#749ccb"/><stop offset="0.3" stop-color="#6a93c6"/><stop offset="0.4" stop-color="#638dc2"/><stop offset="0.5" stop-color="#5f89bf"/><stop offset="0.6" stop-color="#5d88bf"/><stop offset="0.7" stop-color="#5e89c0"/><stop offset="0.8" stop-color="#628dc3"/><stop offset="0.9" stop-color="#6893c7"/><stop offset="1.0" stop-color="#719ccd"/></linearGradient>
<linearGradient id="s53" x1="283" x2="821" y1="0" y2="0" gradientUnits="userSpaceOnUse"><stop offset="0.0" stop-color="#92b7dd"/><stop offset="0.1" stop-color="#83a9d4"/><stop offset="0.2" stop-color="#769ecd"/><stop offset="0.3" stop-color="#6c95c7"/><stop offset="0.4" stop-color="#658fc3"/><stop offset="0.5" stop-color="#618bc1"/><stop offset="0.6" stop-color="#5f89c0"/><stop offset="0.7" stop-color="#608bc1"/><stop offset="0.8" stop-color="#648fc4"/><stop offset="0.9" stop-color="#6a95c8"/><stop offset="1.0" stop-color="#739ece"/></linearGradient>
<linearGradient id="s54" x1="283" x2="821" y1="0" y2="0" gradientUnits="userSpaceOnUse"><stop offset="0.0" stop-color="#95bade"/><stop offset="0.1" stop-color="#85acd5"/><stop offset="0.2" stop-color="#78a0ce"/><stop offset="0.3" stop-color="#6e97c8"/><stop offset="0.4" stop-color="#6791c4"/><stop offset="0.5" stop-color="#638dc2"/><stop offset="0.6" stop-color="#618bc1"/><stop offset="0.7" stop-color="#628dc2"/><stop offset="0.8" stop-color="#6691c5"/><stop offset="0.9" stop-color="#6c97ca"/><stop offset="1.0" stop-color="#75a0d0"/></linearGradient>
<linearGradient id="s55" x1="283" x2="821" y1="0" y2="0" gradientUnits="userSpaceOnUse"><stop offset="0.0" stop-color="#97bce0"/><stop offset="0.1" stop-color="#88aed7"/><stop offset="0.2" stop-color="#7ba2cf"/><stop offset="0.3" stop-color="#7199ca"/><stop offset="0.4" stop-color="#6a93c6"/><stop offset="0.5" stop-color="#658fc3"/><stop offset="0.6" stop-color="#638ec3"/><stop offset="0.7" stop-color="#648fc4"/><stop offset="0.8" stop-color="#6893c7"/><stop offset="0.9" stop-color="#6f99cb"/><stop offset="1.0" stop-color="#78a3d1"/></linearGradient>
<linearGradient id="s56" x1="283" x2="821" y1="0" y2="0" gradientUnits="userSpaceOnUse"><stop offset="0.0" stop-color="#9abfe1"/><stop offset="0.1" stop-color="#8bb1d8"/><stop offset="0.2" stop-color="#7ea5d1"/><stop offset="0.3" stop-color="#739ccb"/><stop offset="0.4" stop-color="#6c95c7"/><stop offset="0.5" stop-color="#6791c5"/><stop offset="0.6" stop-color="#6690c4"/><stop offset="0.7" stop-color="#6791c5"/><stop offset="0.8" stop-color="#6a95c8"/><stop offset="0.9" stop-color="#719ccd"/><stop offset="1.0" stop-color="#7ba5d3"/></linearGradient>
<linearGradient id="s57" x1="283" x2="821" y1="0" y2="0" gradientUnits="userSpaceOnUse"><stop offset="0.0" stop-color="#9ec2e3"/><stop offset="0.1" stop-color="#8eb3d9"/><stop offset="0.2" stop-color="#80a7d2"/><stop offset="0.3" stop-color="#769ecc"/><stop offset="0.4" stop-color="#6f97c8"/><stop offset="0.5" stop-color="#6a93c6"/><stop offset="0.6" stop-color="#6892c5"/><stop offset="0.7" stop-color="#6994c7"/><stop offset="0.8" stop-color="#6d98c9"/><stop offset="0.9" stop-color="#749ece"/><stop offset="1.0" stop-color="#7da8d4"/></linearGradient>
<linearGradient id="s58" x1="283" x2="821" y1="0" y2="0" gradientUnits="userSpaceOnUse"><stop offset="0.0" stop-color="#a1c5e4"/><stop offset="0.1" stop-color="#91b6db"/><stop offset="0.2" stop-color="#83aad3"/><stop offset="0.3" stop-color="#79a1ce"/><stop offset="0.4" stop-color="#719aca"/><stop offset="0.5" stop-color="#6d96c7"/><stop offset="0.6" stop-color="#6b95c7"/><stop offset="0.7" stop-color="#6c96c8"/><stop offset="0.8" stop-color="#709acb"/><stop offset="0.9" stop-color="#77a1d0"/><stop offset="1.0" stop-color="#80abd6"/></linearGradient>
<linearGradient id="s59" x1="283" x2="821" y1="0" y2="0" gradientUnits="userSpaceOnUse"><stop offset="0.0" stop-color="#a5c8e6"/><stop offset="0.1" stop-color="#94b9dd"/><stop offset="0.2" stop-color="#87add5"/><stop offset="0.3" stop-color="#7ca3cf"/><stop offset="0.4" stop-color="#749dcb"/><stop offset="0.5" stop-color="#7099c9"/><stop offset="0.6" stop-color="#6e97c8"/><stop offset="0.7" stop-color="#6f99ca"/><stop offset="0.8" stop-color="#739dcc"/><stop offset="0.9" stop-color="#7aa4d1"/><stop offset="1.0" stop-color="#84add8"/></linearGradient>
<linearGradient id="s60" x1="283" x2="821" y1="0" y2="0" gradientUnits="userSpaceOnUse"><stop offset="0.0" stop-color="#a8cbe7"/><stop offset="0.1" stop-color="#98bcde"/><stop offset="0.2" stop-color="#8ab0d7"/><stop offset="0.3" stop-color="#7fa6d1"/><stop offset="0.4" stop-color="#789fcd"/><stop offset="0.5" stop-color="#739bca"/><stop offset="0.6" stop-color="#719aca"/><stop offset="0.7" stop-color="#729ccb"/><stop offset="0.8" stop-color="#76a0ce"/><stop offset="0.9" stop-color="#7da7d3"/><stop offset="1.0" stop-color="#87b1d9"/></linearGradient>
<linearGradient id="s61" x1="283" x2="821" y1="0" y2="0" gradientUnits="userSpaceOnUse"><stop offset="0.0" stop-color="#accfe9"/><stop offset="0.1" stop-color="#9cbfe0"/><stop offset="0.2" stop-color="#8eb3d8"/><stop offset="0.3" stop-color="#83a9d2"/><stop offset="0.4" stop-color="#7ba2ce"/><stop offset="0.5" stop-color="#769ecc"/><stop offset="0.6" stop-color="#749dcb"/><stop offset="0.7" stop-color="#759fcd"/><stop offset="0.8" stop-color="#79a3d0"/><stop offset="0.9" stop-color="#80aad4"/><stop offset="1.0" stop-color="#8bb4db"/></linearGradient>
<linearGradient id="s62" x1="283" x2="821" y1="0" y2="0" gradientUnits="userSpaceOnUse"><stop offset="0.0" stop-color="#b1d2eb"/><stop offset="0.1" stop-color="#a0c3e1"/><stop offset="0.2" stop-color="#92b6da"/><stop offset="0.3" stop-color="#87add4"/><stop offset="0.4" stop-color="#7fa6d0"/><stop offset="0.5" stop-color="#7aa1cd"/><stop offset="0.6" stop-color="#78a0cd"/><stop offset="0.7" stop-color="#79a2ce"/><stop offset="0.8" stop-color="#7da6d1"/><stop offset="0.9" stop-color="#84add6"/><stop offset="1.0" stop-color="#8eb7dd"/></linearGradient>
<linearGradient id="s63" x1="283" x2="821" y1="0" y2="0" gradientUnits="userSpaceOnUse"><stop offset="0.0" stop-color="#b5d6ed"/><stop offset="0.1" stop-color="#a4c6e3"/><stop offset="0.2" stop-color="#96badb"/><stop offset="0.3" stop-color="#8bb0d5"/><stop offset="0.4" stop-color="#83a9d1"/><stop offset="0.5" stop-color="#7ea5cf"/><stop offset="0.6" stop-color="#7ca3cf"/><stop offset="0.7" stop-color="#7da5d0"/><stop offset="0.8" stop-color="#81a9d3"/><stop offset="0.9" stop-color="#88b1d8"/><stop offset="1.0" stop-color="#92bbde"/></linearGradient>
<linearGradient id="s64" x1="283" x2="821" y1="0" y2="0" gradientUnits="userSpaceOnUse"><stop offset="0.0" stop-color="#badaee"/><stop offset="0.1" stop-color="#a8cae5"/><stop offset="0.2" stop-color="#9abddd"/><stop offset="0.3" stop-color="#8fb3d7"/><stop offset="0.4" stop-color="#87acd3"/><stop offset="0.5" stop-color="#82a8d1"/><stop offset="0.6" stop-color="#80a7d0"/><stop offset="0.7" stop-color="#81a9d2"/><stop offset="0.8" stop-color="#85add5"/><stop offset="0.9" stop-color="#8cb4da"/><stop offset="1.0" stop-color="#97bfe0"/></linearGradient>
<linearGradient id="s65" x1="283" x2="821" y1="0" y2="0" gradientUnits="userSpaceOnUse"><stop offset="0.0" stop-color="#bfdef0"/><stop offset="0.1" stop-color="#adcee7"/><stop offset="0.2" stop-color="#9fc1df"/><stop offset="0.3" stop-color="#93b7d9"/><stop offset="0.4" stop-color="#8bb0d5"/><stop offset="0.5" stop-color="#86acd2"/><stop offset="0.6" stop-color="#84abd2"/><stop offset="0.7" stop-color="#85acd3"/><stop offset="0.8" stop-color="#89b1d6"/><stop offset="0.9" stop-color="#91b8db"/><stop offset="1.0" stop-color="#9bc2e2"/></linearGradient>
<linearGradient id="s66" x1="283" x2="821" y1="0" y2="0" gradientUnits="userSpaceOnUse"><stop offset="0.0" stop-color="#c3e1f0"/><stop offset="0.1" stop-color="#b2d2e8"/><stop offset="0.2" stop-color="#a4c5e1"/><stop offset="0.3" stop-color="#98bbdb"/><stop offset="0.4" stop-color="#90b4d6"/><stop offset="0.5" stop-color="#8bb0d4"/><stop offset="0.6" stop-color="#89aed4"/><stop offset="0.7" stop-color="#8ab0d5"/><stop offset="0.8" stop-color="#8eb5d8"/><stop offset="0.9" stop-color="#96bcdd"/><stop offset="1.0" stop-color="#a0c7e4"/></linearGradient>
<linearGradient id="s67" x1="283" x2="821" y1="0" y2="0" gradientUnits="userSpaceOnUse"><stop offset="0.0" stop-color="#c6e1f0"/><stop offset="0.1" stop-color="#b8d6ea"/><stop offset="0.2" stop-color="#a9cae2"/><stop offset="0.3" stop-color="#9dbfdc"/><stop offset="0.4" stop-color="#95b8d8"/><stop offset="0.5" stop-color="#90b4d6"/><stop offset="0.6" stop-color="#8eb3d5"/><stop offset="0.7" stop-color="#8fb4d7"/><stop offset="0.8" stop-color="#93b9da"/><stop offset="0.9" stop-color="#9bc0df"/><stop offset="1.0" stop-color="#a5cbe6"/></linearGradient>
<linearGradient id="s68" x1="283" x2="821" y1="0" y2="0" gradientUnits="userSpaceOnUse"><stop offset="0.0" stop-color="#c8e1f0"/><stop offset="0.1" stop-color="#bcdaeb"/><stop offset="0.2" stop-color="#aecee4"/><stop offset="0.3" stop-color="#a3c4de"/><stop offset="0.4" stop-color="#9abcda"/><stop offset="0.5" stop-color="#95b8d8"/><stop offset="0.6" stop-color="#93b7d7"/><stop offset="0.7" stop-color="#94b9d9"/><stop offset="0.8" stop-color="#98bddc"/><stop offset="0.9" stop-color="#a0c5e1"/><stop offset="1.0" stop-color="#abd0e8"/></linearGradient>
<linearGradient id="s69" x1="283" x2="821" y1="0" y2="0" gradientUnits="userSpaceOnUse"><stop offset="0.0" stop-color="#c8e1f0"/><stop offset="0.1" stop-color="#bfdcec"/><stop offset="0.2" stop-color="#b4d3e6"/><stop offset="0.3" stop-color="#a8c8e0"/><stop offset="0.4" stop-color="#a0c1dc"/><stop offset="0.5" stop-color="#9abdda"/><stop offset="0.6" stop-color="#98bbd9"/><stop offset="0.7" stop-color="#9abddb"/><stop offset="0.8" stop-color="#9ec2de"/><stop offset="0.9" stop-color="#a6cae3"/><stop offset="1.0" stop-color="#b1d4ea"/></linearGradient>
<linearGradient id="s70" x1="283" x2="821" y1="0" y2="0" gradientUnits="userSpaceOnUse"><stop offset="0.0" stop-color="#c8e1f0"/><stop offset="0.1" stop-color="#c2deed"/><stop offset="0.2" stop-color="#b9d7e8"/><stop offset="0.3" stop-color="#aecde2"/><stop offset="0.4" stop-color="#a6c6de"/><stop offset="0.5" stop-color="#a0c1dc"/><stop offset="0.6" stop-color="#9ec0db"/><stop offset="0.7" stop-color="#9fc2dd"/><stop offset="0.8" stop-color="#a4c7e0"/><stop offset="0.9" stop-color="#accfe5"/><stop offset="1.0" stop-color="#b7d8eb"/></linearGradient>
<linearGradient id="s71" x1="283" x2="821" y1="0" y2="0" gradientUnits="userSpaceOnUse"><stop offset="0.0" stop-color="#c8e1f0"/><stop offset="0.1" stop-color="#c3dfee"/><stop offset="0.2" stop-color="#bcd9ea"/><stop offset="0.3" stop-color="#b5d2e4"/><stop offset="0.4" stop-color="#accbe0"/><stop offset="0.5" stop-color="#a7c6dd"/><stop offset="0.6" stop-color="#a5c5dd"/><stop offset="0.7" stop-color="#a6c7de"/><stop offset="0.8" stop-color="#aacce2"/><stop offset="0.9" stop-color="#b2d4e7"/><stop offset="1.0" stop-color="#badaec"/></linearGradient>
<linearGradient id="s72" x1="283" x2="821" y1="0" y2="0" gradientUnits="userSpaceOnUse"><stop offset="0.0" stop-color="#c8e1f0"/><stop offset="0.1" stop-color="#c4e0ee"/><stop offset="0.2" stop-color="#bedaeb"/><stop offset="0.3" stop-color="#b9d6e6"/><stop offset="0.4" stop-color="#b3d0e2"/><stop offset="0.5" stop-color="#adccdf"/><stop offset="0.6" stop-color="#abcadf"/><stop offset="0.7" stop-color="#accce0"/><stop offset="0.8" stop-color="#b1d1e4"/><stop offset="0.9" stop-color="#b8d7e9"/><stop offset="1.0" stop-color="#bcdbec"/></linearGradient>
<linearGradient id="s73" x1="283" x2="821" y1="0" y2="0" gradientUnits="userSpaceOnUse"><stop offset="0.0" stop-color="#c8e1f0"/><stop offset="0.1" stop-color="#c3dfed"/><stop offset="0.2" stop-color="#bfdbeb"/><stop offset="0.3" stop-color="#bbd8e8"/><stop offset="0.4" stop-color="#b8d6e4"/><stop offset="0.5" stop-color="#b4d1e1"/><stop offset="0.6" stop-color="#b2d0e1"/><stop offset="0.7" stop-color="#b3d2e3"/><stop offset="0.8" stop-color="#b8d6e6"/><stop offset="0.9" stop-color="#bad8ea"/><stop offset="1.0" stop-color="#bedcec"/></linearGradient>
<linearGradient id="s74" x1="283" x2="821" y1="0" y2="0" gradientUnits="userSpaceOnUse"><stop offset="0.0" stop-color="#c6deee"/><stop offset="0.1" stop-color="#c2deed"/><stop offset="0.2" stop-color="#bedbeb"/><stop offset="0.3" stop-color="#bcd8ea"/><stop offset="0.4" stop-color="#bad7e6"/><stop offset="0.5" stop-color="#b8d6e4"/><stop offset="0.6" stop-color="#b8d6e3"/><stop offset="0.7" stop-color="#b8d6e5"/><stop offset="0.8" stop-color="#b9d7e8"/><stop offset="0.9" stop-color="#bbd9ea"/><stop offset="1.0" stop-color="#bddbec"/></linearGradient>
<linearGradient id="s75" x1="283" x2="821" y1="0" y2="0" gradientUnits="userSpaceOnUse"><stop offset="0.0" stop-color="#c1dbec"/><stop offset="0.1" stop-color="#bfdbec"/><stop offset="0.2" stop-color="#bdd9eb"/><stop offset="0.3" stop-color="#bbd8ea"/><stop offset="0.4" stop-color="#bad7e8"/><stop offset="0.5" stop-color="#b9d6e6"/><stop offset="0.6" stop-color="#b9d6e5"/><stop offset="0.7" stop-color="#b9d7e7"/><stop offset="0.8" stop-color="#bad7ea"/><stop offset="0.9" stop-color="#bbd8ea"/><stop offset="1.0" stop-color="#bcdaeb"/></linearGradient>
<linearGradient id="s76" x1="283" x2="821" y1="0" y2="0" gradientUnits="userSpaceOnUse"><stop offset="0.0" stop-color="#bbd7ea"/><stop offset="0.1" stop-color="#bad7ea"/><stop offset="0.2" stop-color="#bad7ea"/><stop offset="0.3" stop-color="#b9d7ea"/><stop offset="0.4" stop-color="#b9d6ea"/><stop offset="0.5" stop-color="#b8d6e8"/><stop offset="0.6" stop-color="#b8d6e7"/><stop offset="0.7" stop-color="#b8d6e9"/><stop offset="0.8" stop-color="#b9d6ea"/><stop offset="0.9" stop-color="#b9d7ea"/><stop offset="1.0" stop-color="#b9d7ea"/></linearGradient>
<linearGradient id="s77" x1="283" x2="821" y1="0" y2="0" gradientUnits="userSpaceOnUse"><stop offset="0.0" stop-color="#b8d6ea"/><stop offset="0.1" stop-color="#b8d6ea"/><stop offset="0.2" stop-color="#b8d6ea"/><stop offset="0.3" stop-color="#b8d6ea"/><stop offset="0.4" stop-color="#b8d6ea"/><stop offset="0.5" stop-color="#b8d6e9"/><stop offset="0.6" stop-color="#b8d6e9"/><stop offset="0.7" stop-color="#b8d6ea"/><stop offset="0.8" stop-color="#b8d6ea"/><stop offset="0.9" stop-color="#b8d6ea"/><stop offset="1.0" stop-color="#b8d6ea"/></linearGradient>
<linearGradient id="psky" x1="380" y1="430" x2="565" y2="470" gradientUnits="userSpaceOnUse">
<stop offset="0" stop-color="#4f72af"/>
<stop offset="0.5" stop-color="#6190c8"/>
<stop offset="1" stop-color="#80acd9"/>
</linearGradient>
<linearGradient id="psky2" x1="0" y1="430" x2="0" y2="541" gradientUnits="userSpaceOnUse">
<stop offset="0" stop-color="#cfe2f0" stop-opacity="0"/>
<stop offset="0.55" stop-color="#cfe2f0" stop-opacity="0.15"/>
<stop offset="1" stop-color="#d8e6f0" stop-opacity="0.9"/>
</linearGradient>
<linearGradient id="pground" x1="387" y1="0" x2="564" y2="0" gradientUnits="userSpaceOnUse">
<stop offset="0" stop-color="#7e7976"/>
<stop offset="0.5" stop-color="#a7a19c"/>
<stop offset="1" stop-color="#c0bab4"/>
</linearGradient>
<linearGradient id="cl1" x1="0" y1="426" x2="0" y2="496" gradientUnits="userSpaceOnUse">
<stop offset="0" stop-color="#faf8f8"/>
<stop offset="0.55" stop-color="#e8e6e8"/>
<stop offset="1" stop-color="#c8c8d0"/>
</linearGradient>
<linearGradient id="cl2" x1="0" y1="460" x2="0" y2="505" gradientUnits="userSpaceOnUse">
<stop offset="0" stop-color="#c8c8d0"/>
<stop offset="0.5" stop-color="#e4e2e4"/>
<stop offset="1" stop-color="#b9bcc8"/>
</linearGradient>
<filter id="b2" x="-50%" y="-50%" width="200%" height="200%"><feGaussianBlur stdDeviation="2"/></filter>
<filter id="b3" x="-50%" y="-50%" width="200%" height="200%"><feGaussianBlur stdDeviation="3"/></filter>
<filter id="b5" x="-50%" y="-50%" width="200%" height="200%"><feGaussianBlur stdDeviation="5"/></filter>
<clipPath id="pclip"><path d="M379.3 428.9 L565 438.2 L564 608 L386.8 615 Z"/></clipPath>
<clipPath id="skyclip"><rect x="283" y="78" width="538" height="463"/></clipPath>
</defs>
<g>
<rect x="283" y="78" width="538" height="6.5" fill="url(#s0)"/>
<rect x="283" y="84" width="538" height="6.5" fill="url(#s1)"/>
<rect x="283" y="90" width="538" height="6.5" fill="url(#s2)"/>
<rect x="283" y="96" width="538" height="6.5" fill="url(#s3)"/>
<rect x="283" y="102" width="538" height="6.5" fill="url(#s4)"/>
<rect x="283" y="108" width="538" height="6.5" fill="url(#s5)"/>
<rect x="283" y="114" width="538" height="6.5" fill="url(#s6)"/>
<rect x="283" y="120" width="538" height="6.5" fill="url(#s7)"/>
<rect x="283" y="126" width="538" height="6.5" fill="url(#s8)"/>
<rect x="283" y="132" width="538" height="6.5" fill="url(#s9)"/>
<rect x="283" y="138" width="538" height="6.5" fill="url(#s10)"/>
<rect x="283" y="144" width="538" height="6.5" fill="url(#s11)"/>
<rect x="283" y="150" width="538" height="6.5" fill="url(#s12)"/>
<rect x="283" y="156" width="538" height="6.5" fill="url(#s13)"/>
<rect x="283" y="162" width="538" height="6.5" fill="url(#s14)"/>
<rect x="283" y="168" width="538" height="6.5" fill="url(#s15)"/>
<rect x="283" y="174" width="538" height="6.5" fill="url(#s16)"/>
<rect x="283" y="180" width="538" height="6.5" fill="url(#s17)"/>
<rect x="283" y="186" width="538" height="6.5" fill="url(#s18)"/>
<rect x="283" y="192" width="538" height="6.5" fill="url(#s19)"/>
<rect x="283" y="198" width="538" height="6.5" fill="url(#s20)"/>
<rect x="283" y="204" width="538" height="6.5" fill="url(#s21)"/>
<rect x="283" y="210" width="538" height="6.5" fill="url(#s22)"/>
<rect x="283" y="216" width="538" height="6.5" fill="url(#s23)"/>
<rect x="283" y="222" width="538" height="6.5" fill="url(#s24)"/>
<rect x="283" y="228" width="538" height="6.5" fill="url(#s25)"/>
<rect x="283" y="234" width="538" height="6.5" fill="url(#s26)"/>
<rect x="283" y="240" width="538" height="6.5" fill="url(#s27)"/>
<rect x="283" y="246" width="538" height="6.5" fill="url(#s28)"/>
<rect x="283" y="252" width="538" height="6.5" fill="url(#s29)"/>
<rect x="283" y="258" width="538" height="6.5" fill="url(#s30)"/>
<rect x="283" y="264" width="538" height="6.5" fill="url(#s31)"/>
<rect x="283" y="270" width="538" height="6.5" fill="url(#s32)"/>
<rect x="283" y="276" width="538" height="6.5" fill="url(#s33)"/>
<rect x="283" y="282" width="538" height="6.5" fill="url(#s34)"/>
<rect x="283" y="288" width="538" height="6.5" fill="url(#s35)"/>
<rect x="283" y="294" width="538" height="6.5" fill="url(#s36)"/>
<rect x="283" y="300" width="538" height="6.5" fill="url(#s37)"/>
<rect x="283" y="306" width="538" height="6.5" fill="url(#s38)"/>
<rect x="283" y="312" width="538" height="6.5" fill="url(#s39)"/>
<rect x="283" y="318" width="538" height="6.5" fill="url(#s40)"/>
<rect x="283" y="324" width="538" height="6.5" fill="url(#s41)"/>
<rect x="283" y="330" width="538" height="6.5" fill="url(#s42)"/>
<rect x="283" y="336" width="538" height="6.5" fill="url(#s43)"/>
<rect x="283" y="342" width="538" height="6.5" fill="url(#s44)"/>
<rect x="283" y="348" width="538" height="6.5" fill="url(#s45)"/>
<rect x="283" y="354" width="538" height="6.5" fill="url(#s46)"/>
<rect x="283" y="360" width="538" height="6.5" fill="url(#s47)"/>
<rect x="283" y="366" width="538" height="6.5" fill="url(#s48)"/>
<rect x="283" y="372" width="538" height="6.5" fill="url(#s49)"/>
<rect x="283" y="378" width="538" height="6.5" fill="url(#s50)"/>
<rect x="283" y="384" width="538" height="6.5" fill="url(#s51)"/>
<rect x="283" y="390" width="538" height="6.5" fill="url(#s52)"/>
<rect x="283" y="396" width="538" height="6.5" fill="url(#s53)"/>
<rect x="283" y="402" width="538" height="6.5" fill="url(#s54)"/>
<rect x="283" y="408" width="538" height="6.5" fill="url(#s55)"/>
<rect x="283" y="414" width="538" height="6.5" fill="url(#s56)"/>
<rect x="283" y="420" width="538" height="6.5" fill="url(#s57)"/>
<rect x="283" y="426" width="538" height="6.5" fill="url(#s58)"/>
<rect x="283" y="432" width="538" height="6.5" fill="url(#s59)"/>
<rect x="283" y="438" width="538" height="6.5" fill="url(#s60)"/>
<rect x="283" y="444" width="538" height="6.5" fill="url(#s61)"/>
<rect x="283" y="450" width="538" height="6.5" fill="url(#s62)"/>
<rect x="283" y="456" width="538" height="6.5" fill="url(#s63)"/>
<rect x="283" y="462" width="538" height="6.5" fill="url(#s64)"/>
<rect x="283" y="468" width="538" height="6.5" fill="url(#s65)"/>
<rect x="283" y="474" width="538" height="6.5" fill="url(#s66)"/>
<rect x="283" y="480" width="538" height="6.5" fill="url(#s67)"/>
<rect x="283" y="486" width="538" height="6.5" fill="url(#s68)"/>
<rect x="283" y="492" width="538" height="6.5" fill="url(#s69)"/>
<rect x="283" y="498" width="538" height="6.5" fill="url(#s70)"/>
<rect x="283" y="504" width="538" height="6.5" fill="url(#s71)"/>
<rect x="283" y="510" width="538" height="6.5" fill="url(#s72)"/>
<rect x="283" y="516" width="538" height="6.5" fill="url(#s73)"/>
<rect x="283" y="522" width="538" height="6.5" fill="url(#s74)"/>
<rect x="283" y="528" width="538" height="6.5" fill="url(#s75)"/>
<rect x="283" y="534" width="538" height="6.5" fill="url(#s76)"/>
<rect x="283" y="540" width="538" height="1.5" fill="url(#s77)"/>
</g>
<g clip-path="url(#skyclip)">
<!-- left big cloud -->
<path d="M270 424 C290 425 305 431 322 438 C335 436 348 438 358 445 C370 451 380 454 392 460 L392 497 C365 498 330 492 270 488 Z" fill="url(#cl1)" filter="url(#b2)"/>
<path d="M270 486 C300 488 330 494 360 500 C375 504 385 508 392 512 L392 528 L270 528 Z" fill="#c9ccd5" filter="url(#b3)"/>
<path d="M270 518 C310 516 340 520 392 522 L392 545 L270 545 Z" fill="#e6eaef" filter="url(#b3)"/>
<!-- lower band -->
<ellipse cx="745" cy="531" rx="62" ry="5" fill="#eef1f4" opacity=".85" filter="url(#b2)"/>
<ellipse cx="800" cy="529" rx="30" ry="4" fill="#eef1f4" opacity=".8" filter="url(#b2)"/>
<ellipse cx="700" cy="535" rx="40" ry="4" fill="#eef1f4" opacity=".8" filter="url(#b2)"/>
<ellipse cx="745" cy="520" rx="22" ry="2.5" fill="#e4ecf2" opacity=".5" filter="url(#b2)"/>
<rect x="560" y="536" width="270" height="6" fill="#dfe8ee" opacity=".7" filter="url(#b2)"/>
<path d="M662 514 C672 512 684 516 690 522 L690 536 L662 536 Z" fill="#eef1f4" filter="url(#b2)"/>
<!-- right clouds -->
<path d="M616 448 C618 440 626 435 636 435 C648 435 654 440 660 446 C668 448 676 452 680 460 C676 462 668 460 660 456 C648 449 630 450 616 448Z" fill="#f2f2f5" filter="url(#b2)"/>
<path d="M665 509 C664 500 672 497 682 496 C692 492 705 490 720 491 C735 491 746 496 748 503 C746 508 738 510 720 510 C700 510 680 510 665 509Z" fill="#f1f2f5" filter="url(#b2)"/>
<path d="M754 508 C756 503 765 500 778 500 C792 499 806 502 808 507 C805 511 790 511 775 511 C765 511 756 510 754 508Z" fill="#eef0f4" filter="url(#b2)"/>
</g>
<rect x="283" y="541" width="538" height="490" fill="#b5b0aa"/>
<!-- left transparent plane -->
<g clip-path="url(#pclip)">
<rect x="370" y="420" width="200" height="121" fill="url(#psky)"/>
<rect x="370" y="420" width="200" height="121" fill="url(#psky2)"/>
<path d="M380 459 C395 461 410 466 429 472 C436 477 440 480 446 480 C458 478 470 477 487 477 C497 478 503 480 507 482 C512 486 515 489 518 490 C522 486 527 484 533 485 C542 486 550 488 556 494 C556 499 552 500 546 500 C538 504 530 506 522 504 C512 498 500 499 480 501 C460 503 440 504 424 504 C410 502 395 498 380 497 Z" fill="url(#cl2)" filter="url(#b2)"/>
<path d="M482 512 C486 506 496 504 506 506 C512 509 510 515 504 516 C496 517 488 517 482 512Z" fill="#edf0f3" filter="url(#b2)"/>
<ellipse cx="420" cy="522" rx="38" ry="6" fill="#e8ecf0" opacity=".9" filter="url(#b2)"/>
<ellipse cx="500" cy="528" rx="55" ry="6" fill="#e6eaee" opacity=".85" filter="url(#b2)"/>
<ellipse cx="545" cy="520" rx="22" ry="5" fill="#e8ecf0" opacity=".8" filter="url(#b2)"/>
<rect x="380" y="532" width="190" height="9" fill="#dde6ee" opacity=".8" filter="url(#b2)"/>
<rect x="370" y="541" width="200" height="80" fill="url(#pground)"/>
</g>
<!-- right plane -->
<path d="M579.2 447.7 L663.7 451.6 L660.1 607 L578.6 609 Z" fill="#a4a9c0" stroke="#000" stroke-width="3" stroke-linejoin="miter"/>
<!-- gizmo dots -->
<g fill="#2c4f90">
<rect x="722" y="459" width="1.6" height="1.6"/><rect x="725.2" y="459" width="1.6" height="1.6"/><rect x="728.4" y="459" width="1.6" height="1.6"/>
<rect x="722" y="462.2" width="1.6" height="1.6"/><rect x="728.4" y="462.2" width="1.6" height="1.6"/>
<rect x="722" y="465.4" width="1.6" height="1.6"/><rect x="725.2" y="465.4" width="1.6" height="1.6"/><rect x="728.4" y="465.4" width="1.6" height="1.6"/>
</g>
<g fill="#8a8c90" opacity=".55">
<rect x="721" y="501" width="1.4" height="1.4"/><rect x="724" y="501" width="1.4" height="1.4"/><rect x="727" y="501" width="1.4" height="1.4"/>
<rect x="721" y="504" width="1.4" height="1.4"/><rect x="727" y="504" width="1.4" height="1.4"/>
<rect x="721" y="507" width="1.4" height="1.4"/><rect x="724" y="507" width="1.4" height="1.4"/><rect x="727" y="507" width="1.4" height="1.4"/>
<rect x="720" y="532" width="1.6" height="1.6"/><rect x="723" y="532" width="1.6" height="1.6"/><rect x="726" y="532" width="1.6" height="1.6"/>
<rect x="720" y="535" width="1.6" height="1.6"/><rect x="726" y="535" width="1.6" height="1.6"/>
<rect x="720" y="538" width="1.6" height="1.6"/><rect x="723" y="538" width="1.6" height="1.6"/><rect x="726" y="538" width="1.6" height="1.6"/>
<rect x="720" y="551" width="1.6" height="1.6"/><rect x="723" y="551" width="1.6" height="1.6"/><rect x="726" y="551" width="1.6" height="1.6"/>
<rect x="720" y="554" width="1.6" height="1.6"/><rect x="726" y="554" width="1.6" height="1.6"/>
<rect x="720" y="557" width="1.6" height="1.6"/><rect x="723" y="557" width="1.6" height="1.6"/><rect x="726" y="557" width="1.6" height="1.6"/>
</g>
</svg>

<!-- viewport toolbar -->
<div class="vb" style="left:291px;width:66px"></div>
<div class="a" style="left:333px;top:80px;width:1px;height:24px;background:rgba(70,90,120,.5)"></div>
<svg class="i" style="left:291px;top:80px" width="66" height="24" viewBox="291 80 66 24"><path d="M303.8 93 V85.8 M301.3 88.2 L303.8 85.6 L306.3 88.2 M303.8 93 L297.6 98.4 M303.8 93 L310 98.4 M297.4 95.2 V98.6 H300.8 M310.2 95.2 V98.6 H306.8" stroke-width="1.3"/><path d="M316.6 90.8 L320.2 94.3 L323.8 90.8" stroke-width="1.2"/><circle cx="344.8" cy="92" r="6" stroke-width="1.2"/><ellipse cx="344.8" cy="92" rx="2.6" ry="6" stroke-width="1.2"/><path d="M338.8 90 H350.8 M338.8 94 H350.8" stroke-width="1.2"/></svg>
<div class="a" style="left:365px;top:80px;width:24px;height:24px;border-radius:4px;background:#1c1f27"></div>
<svg class="i" style="left:365px;top:80px" width="24" height="24" viewBox="365 80 24 24"><path d="M371.6 98.4 L372 95.8 L378 89.8 L380.2 92 L374.2 98 Z" stroke-width="1.25"/><path d="M376.4 88.6 L381.4 93.6" stroke-width="1.25"/><path d="M378.6 90.8 L381.4 88 C382.3 87.1 382.5 86 381.8 85.3 C381.1 84.6 380 84.8 379.1 85.7 L376.6 88.2" stroke-width="1.25"/></svg>

<div class="vb" style="left:559px;width:98px"></div>
<div class="a" style="left:584px;top:80px;width:1px;height:24px;background:rgba(70,90,120,.5)"></div>
<svg class="i" style="left:559px;top:80px" width="26" height="24" viewBox="559 80 26 24"><path d="M565 88.6 V85.3 H568.3 M575.6 85.3 H578.8 V88.6 M578.8 95.4 V98.7 H575.6 M568.3 98.7 H565 V95.4" stroke-width="1.2"/><path d="M567.6 90.2 H569.6 L570.6 88.4 H573.4 L574.4 90.2 H576.3 V95.8 H567.6 Z" stroke-width="1.2"/><circle cx="572" cy="92.9" r="1.3" stroke-width="1.1"/></svg>
<svg class="i" style="left:636px;top:84px" width="16" height="16" viewBox="636 84 16 16"><path d="M640.2 90.4 L644.1 94.3 L648 90.4" stroke-width="1.2"/></svg>

<div class="vb" style="left:665px;width:91px"></div>
<svg class="i" style="left:670px;top:80px" width="24" height="24" viewBox="670 80 24 24"><path d="M675.2 92.3 C677.2 89.3 679.5 88 682 88 C684.5 88 686.8 89.3 688.8 92.3 C686.8 95.3 684.5 96.6 682 96.6 C679.5 96.6 677.2 95.3 675.2 92.3Z" stroke-width="1.2"/><circle cx="682" cy="92.3" r="2" stroke-width="1.2"/></svg>
<svg class="i" style="left:736px;top:84px" width="16" height="16" viewBox="736 84 16 16"><path d="M739.4 90.4 L743.2 94.3 L747 90.4" stroke-width="1.2"/></svg>

<div class="vb" style="left:764px;width:49px"></div>
<svg class="i" style="left:766px;top:80px" width="46" height="24" viewBox="766 80 46 24"><rect x="777.2" y="86.4" width="8" height="6.2" rx=".8" stroke-width="1.2"/><path d="M785.2 88.4 L788.6 86.8 V92.2 L785.2 90.6" stroke-width="1.2"/><path d="M774.2 94.6 C773.2 95.2 773.2 96.4 774.2 97 C776 98.2 779 98.6 781.2 98.6 M788.2 94.6 C789.2 95.2 789.2 96.4 788.2 97 C787 97.8 785.6 98.2 784.2 98.4 M779.8 97.2 L781.4 98.6 L779.8 100" stroke-width="1.1"/><path d="M796 90.4 L799.9 94.3 L803.8 90.4" stroke-width="1.2"/></svg>

<!-- bottom hints -->
<div class="a" style="left:293px;top:1004px;width:191px;height:19.5px;background:#8b8682;border-radius:3px"></div>
<div class="a" style="left:295px;top:1006px;width:22.5px;height:15.7px;background:#a19c98;border-radius:2px"></div>
<div class="a" style="left:490px;top:1004px;width:102px;height:19.5px;background:#8b8682;border-radius:3px"></div>
<div class="a" style="left:491.5px;top:1006px;width:16.5px;height:15.7px;background:#a19c98;border-radius:2px"></div>
<div class="a" style="left:598.4px;top:1004px;width:92.6px;height:19.5px;background:#8b8682;border-radius:3px"></div>
<div class="a" style="left:600.4px;top:1006px;width:17.6px;height:15.7px;background:#a19c98;border-radius:2px"></div>

<!-- eyedropper cursor -->
<svg class="a" style="left:462px;top:904px;overflow:visible" width="32" height="32" viewBox="0 0 32 32">
<g transform="translate(16.4 16.2) scale(.9) translate(-16 -16)">
<g stroke="#fff" stroke-width="4.2" stroke-linejoin="round" stroke-linecap="round" fill="#fff">
<path d="M16 11.2 L20.8 6.8 C21.9 5.9 23.4 6 24.3 6.9 C25.2 7.8 25.3 9.3 24.4 10.4 L20 15.2 Z"/>
<path d="M14.6 10.4 L21.4 17.2"/>
<path d="M16.6 12.4 L6.8 22.2 L6.9 24.9 L9.6 24.8 L19.4 15.2 Z"/>
</g>
<path d="M16 11.2 L20.8 6.8 C21.9 5.9 23.4 6 24.3 6.9 C25.2 7.8 25.3 9.3 24.4 10.4 L20 15.2 Z" fill="#000" stroke="#000" stroke-width="1" stroke-linejoin="round"/>
<path d="M14.6 10.4 L21.4 17.2" stroke="#000" stroke-width="2.2" stroke-linecap="round"/>
<path d="M16.6 12.4 L6.8 22.2 L6.9 24.9 L9.6 24.8 L19.4 15.2 Z" fill="#fff" stroke="#000" stroke-width="1.7" stroke-linejoin="round"/>
</g>
</svg>



<!-- ===== RIGHT PANEL ===== -->
<svg class="i" style="left:1026px;top:82px" width="24" height="20" viewBox="1026 82 24 20"><path d="M1035.8 85 L1036.9 88.6 L1040.5 89.7 L1036.9 90.8 L1035.8 94.4 L1034.7 90.8 L1031.1 89.7 L1034.7 88.6Z" stroke-width="1.3"/><path d="M1039.6 94.6 L1040.2 96.1 L1041.7 96.7 L1040.2 97.3 L1039.6 98.8 L1039 97.3 L1037.5 96.7 L1039 96.1Z" stroke-width="1.1"/><circle cx="1043" cy="92" r="1.2" fill="#e6e6e8" stroke="none"/></svg>
<div class="a" style="left:822px;top:112px;width:238px;height:1px;background:#2c2f37"></div>


<div class="ibtn" style="left:833px;top:146px"></div>
<div class="ibtn" style="left:869px;top:146px"></div>
<div class="ibtn" style="left:905px;top:146px"></div>
<div class="ibtn" style="left:941px;top:146px"></div>
<div class="ibtn" style="left:977px;top:146px"></div>
<svg class="i" style="left:833px;top:146px" width="180" height="30" viewBox="833 146 180 30">
<circle cx="844.6" cy="157.6" r="3.4" stroke-width="1.2"/><path d="M841.6 167.8 L842.2 165.6 L849.6 158.2 L852 160.6 L844.6 168 Z M848.6 157 L853.2 161.6 M850.8 159.4 L853.6 156.6 C854.4 155.8 854.4 154.8 853.7 154.1 C853 153.4 852 153.4 851.2 154.2 L848.4 157" stroke-width="1.2"/>
<rect x="877.4" y="154.6" width="11.6" height="11.4" rx="1.2" stroke-width="1.2"/><path d="M883.2 157.4 V163.2 M880.3 160.3 H886.1" stroke-width="1.1"/><path d="M879 168.3 H891.2 V156.4" stroke-width="1.2"/>
<path d="M918.8 166.4 A6 6 0 1 1 925 159.8" stroke-width="1.2"/><path d="M913.6 162.4 L920.4 155.2 M915.6 165 L922.6 157.8" stroke-width="1.1"/><path d="M924.4 160.8 V167.6 M922.2 165.4 L924.4 167.6 L926.6 165.4" stroke-width="1.2"/>
<path d="M954.2 166.6 A6 6 0 1 1 960.6 159" stroke-width="1.2"/><path d="M949.6 162.4 L956.4 155.2 M951.6 165 L958.2 158.2" stroke-width="1.1"/>
<path d="M992 160.8 m-6 0 a6 6 0 1 0 2-4.5 M985.4 153.4 V157 H989" stroke-width="1.2"/>
</svg>
<div class="t" style="left:955px;top:161.5px;font-size:8.4px;color:#ececee;-webkit-text-stroke:.25px #ececee">AI</div>

<!-- material template card -->
<div class="card" style="left:833px;top:188px;width:216px;height:100px"></div>
<svg class="i" style="left:843px;top:222px" width="20" height="20" viewBox="843 222 20 20"><path d="M846.3 230.9 L854.1 238.7 M846.3 233.1 L854.1 225.3 M846.3 225.3 L859.7 238.7 M846.3 238.7 L859.7 225.3 M851.9 225.3 L859.7 233.1 M851.9 238.7 L859.7 230.9" stroke="#d6d6d9" stroke-width=".9"/><g fill="#f2f2f4" stroke="none"><circle cx="847.4" cy="232.0" r="1.15"/><circle cx="850.2" cy="234.8" r="0.75"/><circle cx="853.0" cy="237.6" r="1.15"/><circle cx="850.2" cy="229.2" r="0.75"/><circle cx="853.0" cy="232.0" r="1.15"/><circle cx="855.8" cy="234.8" r="0.75"/><circle cx="853.0" cy="226.4" r="1.15"/><circle cx="855.8" cy="229.2" r="0.75"/><circle cx="858.6" cy="232.0" r="1.15"/></g></svg>
<svg class="i" style="left:1020px;top:226px" width="16" height="14" viewBox="1020 226 16 14"><path d="M1025 230.4 L1028.9 234.3 L1032.8 230.4" stroke-width="1.1"/></svg>
<div class="chk" style="left:841px;top:265px;width:14px;height:14px;background:#353840;border-color:#353840"></div>
<svg class="i" style="left:991px;top:264px" width="16" height="16" viewBox="991 264 16 16"><circle cx="999" cy="271.9" r="5.6" stroke="#b9bbbf" stroke-width="1"/><path d="M997.4 270.4 a1.6 1.6 0 1 1 2.3 1.4 c-.5 .3-.7 .6-.7 1.1" stroke="#b9bbbf" stroke-width="1"/><circle cx="999" cy="274.8" r=".55" fill="#b9bbbf" stroke="none"/></svg>

<div class="a" style="left:822px;top:300px;width:238px;height:1px;background:#2e3139"></div>
<!-- Map header -->
<svg class="i" style="left:828px;top:314px" width="14" height="14" viewBox="828 314 14 14"><path d="M832 319.4 L834.8 322.4 L837.6 319.4" stroke="#b5b7bb" stroke-width="1"/></svg>

<!-- base color card -->
<div class="card" style="left:833px;top:340px;width:216px;height:72px"></div>
<div class="a" style="left:941px;top:340px;width:108px;height:30px;background:#2a2d35;border-radius:0 4px 0 0"></div>
<div class="a" style="left:841px;top:377px;width:26px;height:27px;border-radius:3px;background:#2e3139"></div>
<div class="a" style="left:843px;top:379.5px;width:22.4px;height:22.4px;background:#ffffff"></div>

<div class="card" style="left:833px;top:416px;width:216px;height:74px"></div>
<svg class="a" style="left:840px;top:455px" width="28" height="28" viewBox="0 0 28 28"><rect x=".5" y=".5" width="27" height="27" rx="3" fill="#1c1e25" stroke="#2a2d35" stroke-width="1"/><rect x="3.0" y="3.0" width="5.55" height="5.55" fill="#363941"/><rect x="8.5" y="3.0" width="5.55" height="5.55" fill="#50535b"/><rect x="14.0" y="3.0" width="5.55" height="5.55" fill="#363941"/><rect x="19.5" y="3.0" width="5.55" height="5.55" fill="#50535b"/><rect x="3.0" y="8.5" width="5.55" height="5.55" fill="#50535b"/><rect x="8.5" y="8.5" width="5.55" height="5.55" fill="#363941"/><rect x="14.0" y="8.5" width="5.55" height="5.55" fill="#50535b"/><rect x="19.5" y="8.5" width="5.55" height="5.55" fill="#363941"/><rect x="3.0" y="14.0" width="5.55" height="5.55" fill="#363941"/><rect x="8.5" y="14.0" width="5.55" height="5.55" fill="#50535b"/><rect x="14.0" y="14.0" width="5.55" height="5.55" fill="#363941"/><rect x="19.5" y="14.0" width="5.55" height="5.55" fill="#50535b"/><rect x="3.0" y="19.5" width="5.55" height="5.55" fill="#50535b"/><rect x="8.5" y="19.5" width="5.55" height="5.55" fill="#363941"/><rect x="14.0" y="19.5" width="5.55" height="5.55" fill="#50535b"/><rect x="19.5" y="19.5" width="5.55" height="5.55" fill="#363941"/></svg>
<div class="inp" style="left:879px;top:457px;width:134px;height:24px"></div>

<svg class="i" style="left:1018px;top:461px" width="22" height="16" viewBox="0 0 22 16"><path d="M4.2 5.5 H11.2 M14.6 5.5 H17.9 M4.2 10.5 H7.1 M10.5 10.5 H17.9" stroke="#7f8288" stroke-width="1"/><circle cx="12.9" cy="5.5" r="1.7" stroke="#7f8288" stroke-width="1"/><circle cx="8.8" cy="10.5" r="1.7" stroke="#7f8288" stroke-width="1"/></svg>
<div class="a" style="left:946px;top:457px;width:7px;height:24px;background:#3e4149"></div>

<div class="card" style="left:833px;top:494px;width:216px;height:74px"></div>
<svg class="a" style="left:840px;top:533px" width="28" height="28" viewBox="0 0 28 28"><rect x=".5" y=".5" width="27" height="27" rx="3" fill="#1c1e25" stroke="#2a2d35" stroke-width="1"/><rect x="3.0" y="3.0" width="5.55" height="5.55" fill="#363941"/><rect x="8.5" y="3.0" width="5.55" height="5.55" fill="#50535b"/><rect x="14.0" y="3.0" width="5.55" height="5.55" fill="#363941"/><rect x="19.5" y="3.0" width="5.55" height="5.55" fill="#50535b"/><rect x="3.0" y="8.5" width="5.55" height="5.55" fill="#50535b"/><rect x="8.5" y="8.5" width="5.55" height="5.55" fill="#363941"/><rect x="14.0" y="8.5" width="5.55" height="5.55" fill="#50535b"/><rect x="19.5" y="8.5" width="5.55" height="5.55" fill="#363941"/><rect x="3.0" y="14.0" width="5.55" height="5.55" fill="#363941"/><rect x="8.5" y="14.0" width="5.55" height="5.55" fill="#50535b"/><rect x="14.0" y="14.0" width="5.55" height="5.55" fill="#363941"/><rect x="19.5" y="14.0" width="5.55" height="5.55" fill="#50535b"/><rect x="3.0" y="19.5" width="5.55" height="5.55" fill="#50535b"/><rect x="8.5" y="19.5" width="5.55" height="5.55" fill="#363941"/><rect x="14.0" y="19.5" width="5.55" height="5.55" fill="#50535b"/><rect x="19.5" y="19.5" width="5.55" height="5.55" fill="#363941"/></svg>
<div class="inp" style="left:879px;top:535px;width:134px;height:24px"></div>
<div class="a" style="left:879px;top:535px;width:40px;height:24px;background:#3e4149;border-radius:3px 0 0 3px"></div>
<svg class="i" style="left:1018px;top:539px" width="22" height="16" viewBox="0 0 22 16"><path d="M4.2 5.5 H11.2 M14.6 5.5 H17.9 M4.2 10.5 H7.1 M10.5 10.5 H17.9" stroke="#7f8288" stroke-width="1"/><circle cx="12.9" cy="5.5" r="1.7" stroke="#7f8288" stroke-width="1"/><circle cx="8.8" cy="10.5" r="1.7" stroke="#7f8288" stroke-width="1"/></svg>

<div class="card" style="left:833px;top:572px;width:216px;height:74px"></div>
<svg class="a" style="left:840px;top:611px" width="28" height="28" viewBox="0 0 28 28"><rect x=".5" y=".5" width="27" height="27" rx="3" fill="#1c1e25" stroke="#2a2d35" stroke-width="1"/><rect x="3.0" y="3.0" width="5.55" height="5.55" fill="#363941"/><rect x="8.5" y="3.0" width="5.55" height="5.55" fill="#50535b"/><rect x="14.0" y="3.0" width="5.55" height="5.55" fill="#363941"/><rect x="19.5" y="3.0" width="5.55" height="5.55" fill="#50535b"/><rect x="3.0" y="8.5" width="5.55" height="5.55" fill="#50535b"/><rect x="8.5" y="8.5" width="5.55" height="5.55" fill="#363941"/><rect x="14.0" y="8.5" width="5.55" height="5.55" fill="#50535b"/><rect x="19.5" y="8.5" width="5.55" height="5.55" fill="#363941"/><rect x="3.0" y="14.0" width="5.55" height="5.55" fill="#363941"/><rect x="8.5" y="14.0" width="5.55" height="5.55" fill="#50535b"/><rect x="14.0" y="14.0" width="5.55" height="5.55" fill="#363941"/><rect x="19.5" y="14.0" width="5.55" height="5.55" fill="#50535b"/><rect x="3.0" y="19.5" width="5.55" height="5.55" fill="#50535b"/><rect x="8.5" y="19.5" width="5.55" height="5.55" fill="#363941"/><rect x="14.0" y="19.5" width="5.55" height="5.55" fill="#50535b"/><rect x="19.5" y="19.5" width="5.55" height="5.55" fill="#363941"/></svg>
<div class="inp" style="left:879px;top:613px;width:134px;height:24px"></div>
<div class="a" style="left:879px;top:613px;width:54px;height:24px;background:#3e4149;border-radius:3px 0 0 3px"></div>
<svg class="i" style="left:1018px;top:617px" width="22" height="16" viewBox="0 0 22 16"><path d="M4.2 5.5 H11.2 M14.6 5.5 H17.9 M4.2 10.5 H7.1 M10.5 10.5 H17.9" stroke="#7f8288" stroke-width="1"/><circle cx="12.9" cy="5.5" r="1.7" stroke="#7f8288" stroke-width="1"/><circle cx="8.8" cy="10.5" r="1.7" stroke="#7f8288" stroke-width="1"/></svg>

<div class="card" style="left:833px;top:650px;width:216px;height:73px"></div>
<div class="a" style="left:843px;top:691px;width:22.5px;height:22px;background:linear-gradient(90deg,#f4f4f4 0%,#9a9a9a 45%,#000 80%,#000 100%)"></div>
<svg class="i" style="left:1018px;top:695px" width="22" height="16" viewBox="0 0 22 16"><path d="M4.2 5.5 H11 M14.8 5.5 H17.9 M4.2 10.5 H6.9 M10.7 10.5 H17.9" stroke="#e4e4e6" stroke-width="1.1"/><circle cx="12.9" cy="5.5" r="1.9" stroke="#e4e4e6" stroke-width="1.1"/><circle cx="8.8" cy="10.5" r="1.9" stroke="#e4e4e6" stroke-width="1.1"/></svg>
<div class="a" style="left:833.5px;top:653.3px;width:224.5px;height:63.5px;border:3px solid #fff;border-radius:7px"></div>

<div class="card" style="left:833px;top:728px;width:216px;height:74px"></div>
<svg class="a" style="left:840px;top:767px" width="28" height="28" viewBox="0 0 28 28"><rect x=".5" y=".5" width="27" height="27" rx="3" fill="#1c1e25" stroke="#2a2d35" stroke-width="1"/><rect x="3.0" y="3.0" width="5.55" height="5.55" fill="#363941"/><rect x="8.5" y="3.0" width="5.55" height="5.55" fill="#50535b"/><rect x="14.0" y="3.0" width="5.55" height="5.55" fill="#363941"/><rect x="19.5" y="3.0" width="5.55" height="5.55" fill="#50535b"/><rect x="3.0" y="8.5" width="5.55" height="5.55" fill="#50535b"/><rect x="8.5" y="8.5" width="5.55" height="5.55" fill="#363941"/><rect x="14.0" y="8.5" width="5.55" height="5.55" fill="#50535b"/><rect x="19.5" y="8.5" width="5.55" height="5.55" fill="#363941"/><rect x="3.0" y="14.0" width="5.55" height="5.55" fill="#363941"/><rect x="8.5" y="14.0" width="5.55" height="5.55" fill="#50535b"/><rect x="14.0" y="14.0" width="5.55" height="5.55" fill="#363941"/><rect x="19.5" y="14.0" width="5.55" height="5.55" fill="#50535b"/><rect x="3.0" y="19.5" width="5.55" height="5.55" fill="#50535b"/><rect x="8.5" y="19.5" width="5.55" height="5.55" fill="#363941"/><rect x="14.0" y="19.5" width="5.55" height="5.55" fill="#50535b"/><rect x="19.5" y="19.5" width="5.55" height="5.55" fill="#363941"/></svg>
<div class="inp" style="left:879px;top:769px;width:134px;height:24px"></div>

<svg class="i" style="left:1018px;top:773px" width="22" height="16" viewBox="0 0 22 16"><path d="M4.2 5.5 H11.2 M14.6 5.5 H17.9 M4.2 10.5 H7.1 M10.5 10.5 H17.9" stroke="#7f8288" stroke-width="1"/><circle cx="12.9" cy="5.5" r="1.7" stroke="#7f8288" stroke-width="1"/><circle cx="8.8" cy="10.5" r="1.7" stroke="#7f8288" stroke-width="1"/></svg>

<div class="card" style="left:833px;top:806px;width:216px;height:74px"></div>
<svg class="a" style="left:840px;top:845px" width="28" height="28" viewBox="0 0 28 28"><rect x=".5" y=".5" width="27" height="27" rx="3" fill="#1c1e25" stroke="#2a2d35" stroke-width="1"/><rect x="3.0" y="3.0" width="5.55" height="5.55" fill="#363941"/><rect x="8.5" y="3.0" width="5.55" height="5.55" fill="#50535b"/><rect x="14.0" y="3.0" width="5.55" height="5.55" fill="#363941"/><rect x="19.5" y="3.0" width="5.55" height="5.55" fill="#50535b"/><rect x="3.0" y="8.5" width="5.55" height="5.55" fill="#50535b"/><rect x="8.5" y="8.5" width="5.55" height="5.55" fill="#363941"/><rect x="14.0" y="8.5" width="5.55" height="5.55" fill="#50535b"/><rect x="19.5" y="8.5" width="5.55" height="5.55" fill="#363941"/><rect x="3.0" y="14.0" width="5.55" height="5.55" fill="#363941"/><rect x="8.5" y="14.0" width="5.55" height="5.55" fill="#50535b"/><rect x="14.0" y="14.0" width="5.55" height="5.55" fill="#363941"/><rect x="19.5" y="14.0" width="5.55" height="5.55" fill="#50535b"/><rect x="3.0" y="19.5" width="5.55" height="5.55" fill="#50535b"/><rect x="8.5" y="19.5" width="5.55" height="5.55" fill="#363941"/><rect x="14.0" y="19.5" width="5.55" height="5.55" fill="#50535b"/><rect x="19.5" y="19.5" width="5.55" height="5.55" fill="#363941"/></svg>
<div class="inp" style="left:879px;top:847px;width:134px;height:24px"></div>

<svg class="i" style="left:1018px;top:851px" width="22" height="16" viewBox="0 0 22 16"><path d="M4.2 5.5 H11.2 M14.6 5.5 H17.9 M4.2 10.5 H7.1 M10.5 10.5 H17.9" stroke="#7f8288" stroke-width="1"/><circle cx="12.9" cy="5.5" r="1.7" stroke="#7f8288" stroke-width="1"/><circle cx="8.8" cy="10.5" r="1.7" stroke="#7f8288" stroke-width="1"/></svg>

<div class="card" style="left:833px;top:884px;width:216px;height:40px"></div>
<div class="a" style="left:1017px;top:897px;width:24px;height:14px;border-radius:7px;background:#0d0f14"></div>
<div class="a" style="left:1019px;top:899px;width:10px;height:10px;border-radius:50%;background:#efeff1"></div>

<div class="a" style="left:822px;top:932px;width:238px;height:1px;background:#2c2f37"></div>
<svg class="i" style="left:828px;top:946px" width="14" height="14" viewBox="828 946 14 14"><path d="M832 951 L834.8 954 L837.6 951" stroke="#b5b7bb" stroke-width="1"/></svg>

<div class="card" style="left:829px;top:972px;width:225px;height:70px"></div>
<svg class="i" style="left:882px;top:984px" width="14" height="16" viewBox="882 984 14 16"><path d="M887.3 991.2 V989.7 A2.9 2.9 0 0 1 893.1 989.7 V991.2 M887.3 992.8 V994.4 A2.9 2.9 0 0 0 893.1 994.4 V992.8" stroke="#e0e1e4" stroke-width="1.6" stroke-linecap="butt"/><path d="M890.2 989.6 V995" stroke="#a8aaae" stroke-width="1.8"/></svg>
<div class="inp" style="left:906px;top:980px;width:65px;height:23px"></div>
<div class="inp" style="left:980px;top:980px;width:65px;height:23px"></div>
<div class="inp" style="left:900px;top:1008px;width:69px;height:30px"></div>
<div class="inp" style="left:977px;top:1008px;width:68px;height:30px"></div>

<!--TEXTS-->
<div class="t" style="left:160.0px;top:45.4px;font-size:12.6px;color:#e4e4e6;-webkit-text-stroke:0.2px #e4e4e6;">Assets</div>
<div class="t" style="left:16.0px;top:89.7px;font-size:12.6px;color:#a4a6ac;-webkit-text-stroke:0.2px #a4a6ac;">Scene List</div>
<div class="t" style="left:100.7px;top:210.5px;font-size:12.6px;color:#e4e4e6;-webkit-text-stroke:0.25px #e4e4e6;">Create New Scene</div>
<div class="t" style="left:15.9px;top:557.5px;font-size:12.3px;color:#a4a6ac;-webkit-text-stroke:0.2px #a4a6ac;">Layer</div>
<div class="t" style="left:15.9px;top:606.1px;font-size:13px;color:#f0f0f2;-webkit-text-stroke:0.4px #f0f0f2;">Object</div>
<div class="t" style="left:69.1px;top:606.1px;font-size:13px;color:#8d9096;-webkit-text-stroke:0.4px #8d9096;">Imported</div>
<div class="t" style="left:67.0px;top:687.7px;font-size:12.5px;color:#6b6e75;-webkit-text-stroke:0.4px #6b6e75;">Terrain</div>
<div class="t" style="left:66.3px;top:751.4px;font-size:12.5px;color:#ffffff;font-weight:bold;">2</div>
<div class="t" style="left:588.8px;top:86.7px;font-size:12.0px;color:#e6e7ea;-webkit-text-stroke:0.3px #e6e7ea;">Camera</div>
<div class="t" style="left:694.1px;top:86.5px;font-size:12.2px;color:#e6e7ea;-webkit-text-stroke:0.3px #e6e7ea;">Display</div>
<div class="t" style="left:293.3px;top:982.3px;font-size:12.7px;color:#f0f0f0;-webkit-text-stroke:0.15px #f0f0f0;">Movement Speed: 5</div>
<div class="t" style="left:300.3px;top:1009.0px;font-size:11.3px;color:#f4f4f4;-webkit-text-stroke:0.35px #f4f4f4;">Alt</div>
<div class="t" style="left:323.4px;top:1008.7px;font-size:11.7px;color:#f4f4f4;-webkit-text-stroke:0.3px #f4f4f4;">Penetrating material selection</div>
<div class="t" style="left:495.9px;top:1009.0px;font-size:11.3px;color:#f4f4f4;-webkit-text-stroke:0.35px #f4f4f4;">O</div>
<div class="t" style="left:514.7px;top:1008.7px;font-size:11.7px;color:#f4f4f4;-webkit-text-stroke:0.3px #f4f4f4;">Copy Material</div>
<div class="t" style="left:604.8px;top:1009.0px;font-size:11.3px;color:#f4f4f4;-webkit-text-stroke:0.35px #f4f4f4;">M</div>
<div class="t" style="left:624.2px;top:1008.8px;font-size:11.6px;color:#f4f4f4;-webkit-text-stroke:0.3px #f4f4f4;">Open Asset</div>
<div class="t" style="left:837.0px;top:86.9px;font-size:11.5px;color:#7b7e85;-webkit-text-stroke:0.45px #7b7e85;">Environment</div>
<div class="t" style="left:917.7px;top:86.7px;font-size:11.7px;color:#7b7e85;-webkit-text-stroke:0.45px #7b7e85;">Effect</div>
<div class="t" style="left:964.7px;top:86.3px;font-size:11.7px;color:#f4f4f6;-webkit-text-stroke:0.45px #f4f4f6;">Inspector</div>
<div class="t" style="left:833.2px;top:123.8px;font-size:11.3px;color:#eeeef0;-webkit-text-stroke:0.3px #eeeef0;">material_1_1</div>
<div class="t" style="left:844.0px;top:201.4px;font-size:14.1px;color:#9c9ea4;">Material Template</div>
<div class="t" style="left:869.5px;top:225.7px;font-size:13.6px;color:#eeeef0;-webkit-text-stroke:0.25px #eeeef0;">Custom Alpha</div>
<div class="t" style="left:861.7px;top:266.4px;font-size:13.0px;color:#cfd0d4;-webkit-text-stroke:0.2px #cfd0d4;">Invisible in raytracing</div>
<div class="t" style="left:842.7px;top:315.5px;font-size:12.8px;color:#d4d5d8;-webkit-text-stroke:0.4px #d4d5d8;">Map</div>
<div class="t" style="left:856.3px;top:350.0px;font-size:12.3px;color:#f2f2f4;-webkit-text-stroke:0.25px #f2f2f4;">Base Color</div>
<div class="t" style="left:950.2px;top:349.8px;font-size:12.5px;color:#9ea0a6;-webkit-text-stroke:0.2px #9ea0a6;">Base Color Map</div>
<div class="t" style="left:841.1px;top:430.7px;font-size:12.6px;color:#cfd0d4;-webkit-text-stroke:0.4px #cfd0d4;">Normal</div>
<div class="t" style="left:887.0px;top:463.7px;font-size:12.6px;color:#dcdde0;-webkit-text-stroke:0.35px #dcdde0;">0.1</div>
<div class="t" style="left:841.0px;top:508.9px;font-size:12.6px;color:#cfd0d4;-webkit-text-stroke:0.4px #cfd0d4;">Specular</div>
<div class="t" style="left:886.7px;top:541.7px;font-size:12.6px;color:#dcdde0;-webkit-text-stroke:0.35px #dcdde0;">0.3</div>
<div class="t" style="left:841.0px;top:586.9px;font-size:12.6px;color:#cfd0d4;-webkit-text-stroke:0.4px #cfd0d4;">Roughness</div>
<div class="t" style="left:886.7px;top:619.7px;font-size:12.6px;color:#dcdde0;-webkit-text-stroke:0.35px #dcdde0;">0.4</div>
<div class="t" style="left:841.0px;top:665.6px;font-size:12.6px;color:#cfd0d4;-webkit-text-stroke:0.4px #cfd0d4;">Opacity Map</div>
<div class="t" style="left:841.1px;top:742.9px;font-size:12.6px;color:#cfd0d4;-webkit-text-stroke:0.4px #cfd0d4;">Metallic</div>
<div class="t" style="left:886.7px;top:775.8px;font-size:12.6px;color:#dcdde0;-webkit-text-stroke:0.35px #dcdde0;">0</div>
<div class="t" style="left:842.0px;top:820.8px;font-size:12.6px;color:#cfd0d4;-webkit-text-stroke:0.4px #cfd0d4;">AO</div>
<div class="t" style="left:886.7px;top:853.6px;font-size:12.6px;color:#dcdde0;-webkit-text-stroke:0.35px #dcdde0;">0</div>
<div class="t" style="left:841.0px;top:898.7px;font-size:12.6px;color:#cfd0d4;-webkit-text-stroke:0.4px #cfd0d4;">Emissive</div>
<div class="t" style="left:842.7px;top:947.1px;font-size:12.8px;color:#d4d5d8;-webkit-text-stroke:0.4px #d4d5d8;">UV</div>
<div class="t" style="left:837.1px;top:986.5px;font-size:12.6px;color:#cfd0d4;-webkit-text-stroke:0.4px #cfd0d4;">Stretch</div>
<div class="t" style="left:837.0px;top:1014.4px;font-size:12.6px;color:#cfd0d4;-webkit-text-stroke:0.4px #cfd0d4;">Offset</div>
<div class="t" style="left:912.0px;top:986.5px;font-size:12.6px;color:#dcdde0;-webkit-text-stroke:0.35px #dcdde0;">X</div>
<div class="t" style="left:925.6px;top:986.5px;font-size:12.6px;color:#dcdde0;-webkit-text-stroke:0.35px #dcdde0;">1</div>
<div class="t" style="left:985.5px;top:986.5px;font-size:12.6px;color:#dcdde0;-webkit-text-stroke:0.35px #dcdde0;">Y</div>
<div class="t" style="left:999.0px;top:986.5px;font-size:12.6px;color:#dcdde0;-webkit-text-stroke:0.35px #dcdde0;">1</div>
<div class="t" style="left:906.2px;top:1014.4px;font-size:12.6px;color:#dcdde0;-webkit-text-stroke:0.35px #dcdde0;">X</div>
<div class="t" style="left:919.0px;top:1014.4px;font-size:12.6px;color:#dcdde0;-webkit-text-stroke:0.35px #dcdde0;">0</div>
<div class="t" style="left:983.7px;top:1014.4px;font-size:12.6px;color:#dcdde0;-webkit-text-stroke:0.35px #dcdde0;">Y</div>
<div class="t" style="left:996.5px;top:1014.4px;font-size:12.6px;color:#dcdde0;-webkit-text-stroke:0.35px #dcdde0;">0</div>
<!--GLYPHS-->
<svg class="a" style="left:28px;top:8px;overflow:visible" width="12" height="14" viewBox="28 8 12 14"><path d="M35.5 11.1 V20" stroke="#e0e0e2" stroke-width="2.1"/><path d="M32.1 13.5 L35.3 11.3" stroke="#e0e0e2" stroke-width="1.7" stroke-linecap="round"/></svg>
<svg class="a" style="left:62px;top:718px;overflow:visible" width="12" height="14" viewBox="62 718 12 14"><path d="M70.4 721.3 V729.8" stroke="#ececee" stroke-width="2.1"/><path d="M66.6 723.6 L70.2 721.5" stroke="#ececee" stroke-width="1.7" stroke-linecap="round"/></svg>
<!--/GLYPHS-->
<!--/TEXTS-->
<!-- annotation arrow -->
<svg class="a" style="left:630px;top:240px;overflow:visible" width="220" height="240" viewBox="630 240 220 240"><path d="M642.5 463.5 L829 261" stroke="#fff" stroke-width="3.4" stroke-linecap="round"/><path d="M836.8 253.2 L818.4 260.2 L827.2 263.6 L832.2 271.4 Z" fill="#fff" stroke="#fff" stroke-width=".8" stroke-linejoin="round"/></svg>
</div>
<div id="frame"></div>
</body></html>
